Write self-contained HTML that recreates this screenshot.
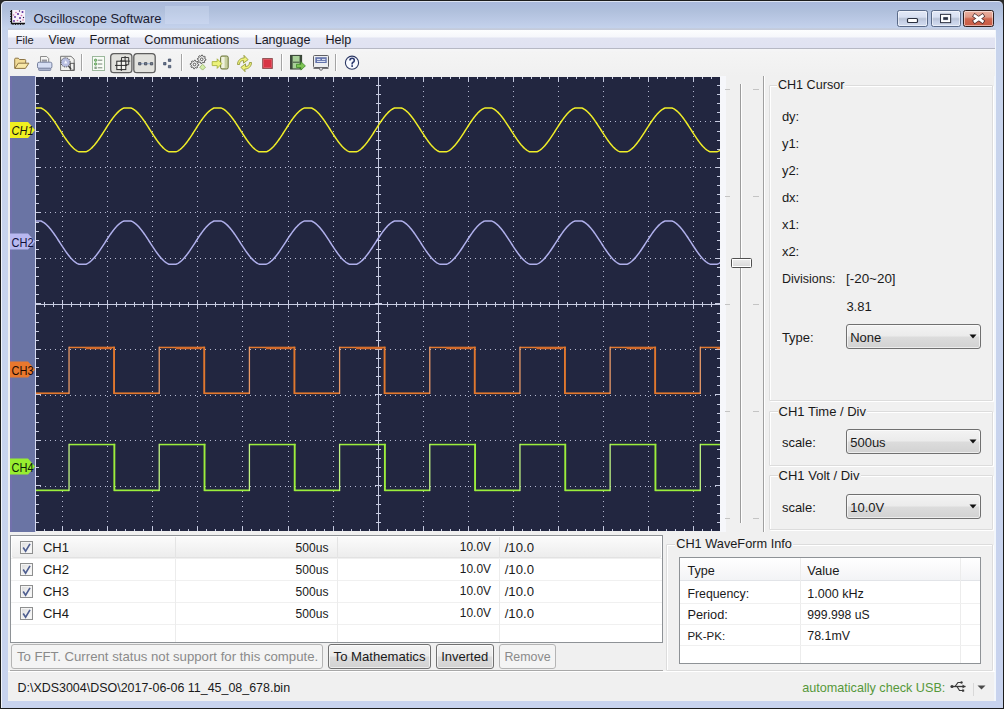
<!DOCTYPE html><html><head><meta charset="utf-8"><style>*{box-sizing:border-box}
html,body{margin:0;padding:0;width:1004px;height:709px;overflow:hidden;background:#2a2a2a;font-family:"Liberation Sans",sans-serif;color:#1a1a1a}
.ab{position:absolute}
.t{position:absolute;white-space:nowrap;line-height:1}
.cb{position:absolute;border:1px solid #707070;border-radius:3px;background:linear-gradient(#f3f3f3 0%,#ebebeb 48%,#dcdcdc 52%,#d2d2d2 100%);box-shadow:inset 0 0 0 1px rgba(255,255,255,.6)}
.dis{position:absolute;border:1px solid #b4b4b4;border-radius:3px;background:#f4f4f4}
.gb{position:absolute;border:1px solid #dcdcdc;border-radius:1px;box-shadow:inset 1px 1px 0 #fff,1px 1px 0 #fff}
</style></head><body><div class="ab" style="left:0;top:0;width:1004px;height:709px;border:1px solid #1c1c1c;border-radius:6px 6px 0 0;background:linear-gradient(#a9b8dc 0px,#b0c0dc 10px,#bccae6 20px,#c4d2ec 27px,#c8d4ec 40px,#c8d3ee 709px)"></div><div class="ab" style="left:1px;top:1px;width:1002px;height:707px;border-top:1px solid rgba(255,255,255,.6);border-left:1px solid rgba(255,255,255,.75);border-radius:5px 5px 0 0"></div><div class="ab" style="left:165px;top:6px;width:44px;height:18px;background:rgba(222,232,252,.3)"></div><svg class="ab" style="left:9px;top:9px" width="18" height="17"><rect x="3" y="1" width="13" height="13" fill="#f8f2fa"/><path d="M2.5 1v13.5H16" stroke="#141414" stroke-width="1.3" fill="none"/><path d="M1 2.5h1.5M1 5h1.5M1 7.5h1.5M1 10h1.5M1 12.5h1.5M4 14.5v1.5M6.5 14.5v1.5M9 14.5v1.5M11.5 14.5v1.5M14 14.5v1.5" stroke="#141414" stroke-width="0.9"/><g fill="#5a2a9a"><circle cx="13.5" cy="3" r="1"/><circle cx="9" cy="5" r="1"/><circle cx="6" cy="8" r="0.9"/><circle cx="11" cy="9" r="1"/><circle cx="5" cy="12" r="0.9"/></g><g fill="#d070a8"><circle cx="7" cy="3.5" r="0.8"/><circle cx="4.5" cy="6" r="0.8"/><circle cx="12.5" cy="6.5" r="0.8"/><circle cx="8.5" cy="11.5" r="0.8"/><circle cx="14" cy="11" r="0.8"/></g><g fill="#2a2050"><circle cx="10.5" cy="2" r="0.7"/><circle cx="14.5" cy="8.5" r="0.7"/><circle cx="11.5" cy="12.5" r="0.7"/></g></svg><div class="t" style="left:33.5px;top:12.65px;font-size:12.94px;color:#1b1b30;">Oscilloscope Software</div><div class="ab" style="left:897px;top:10px;width:30.5px;height:17px;border:1px solid #5a6a88;border-radius:2.5px;background:linear-gradient(#e2e8f6 0%,#d8e0f2 40%,#b8c2d6 52%,#c6d0e6 70%,#d4ddf0 100%);box-shadow:inset 0 0 0 1px rgba(255,255,255,.5)"></div><div class="ab" style="left:930.5px;top:10px;width:30px;height:17px;border:1px solid #5a6a88;border-radius:2.5px;background:linear-gradient(#e2e8f6 0%,#d8e0f2 40%,#b8c2d6 52%,#c6d0e6 70%,#d4ddf0 100%);box-shadow:inset 0 0 0 1px rgba(255,255,255,.5)"></div><div class="ab" style="left:963px;top:10px;width:30.5px;height:17px;border:1px solid #2e1e1e;border-radius:2.5px;background:linear-gradient(#eab0a0 0%,#e09a88 40%,#d06850 52%,#c85a44 100%);box-shadow:inset 0 0 0 1px rgba(255,255,255,.5)"></div><svg class="ab" style="left:895px;top:6px" width="100" height="24"><rect x="12.5" y="12.5" width="10" height="4" rx="1" fill="#fff" stroke="#2a3040" stroke-width="1.2"/><rect x="45.6" y="8.4" width="10" height="8.2" fill="none" stroke="#2a3040" stroke-width="1.1"/><rect x="47" y="9.8" width="7.2" height="5.4" fill="none" stroke="#fff" stroke-width="1.8"/><rect x="48.3" y="11.2" width="4.6" height="2.6" fill="#2a3040"/><path d="M80 10L87.3 15.2M87.3 10L80 15.2" stroke="#4a2a2a" stroke-width="4.2" stroke-linecap="square"/><path d="M80 10L87.3 15.2M87.3 10L80 15.2" stroke="#fff" stroke-width="2.8" stroke-linecap="square"/></svg><div class="ab" style="left:8px;top:30px;width:987px;height:671px;background:#f0f0f0"></div><div class="ab" style="left:994px;top:30px;width:2px;height:671px;background:#f2f6fb"></div><div class="ab" style="left:8px;top:28px;width:987px;height:2px;background:linear-gradient(#c2cde2,#c6cad8)"></div><div class="ab" style="left:8px;top:30px;width:987px;height:19px;background:linear-gradient(#fdfeff 0px,#f6f7fb 7px,#e2e4f2 8px,#e0e2f2 18px);border-bottom:1px solid #b6b8c4"></div><div class="t" style="left:15.8px;top:35.10px;font-size:11.11px;color:#1a1a24;">File</div><div class="t" style="left:48.4px;top:34.06px;font-size:12.33px;color:#1a1a24;">View</div><div class="t" style="left:89.6px;top:33.86px;font-size:12.57px;color:#1a1a24;">Format</div><div class="t" style="left:144.3px;top:33.70px;font-size:12.76px;color:#1a1a24;">Communications</div><div class="t" style="left:254.7px;top:33.90px;font-size:12.52px;color:#1a1a24;">Language</div><div class="t" style="left:325.4px;top:33.84px;font-size:12.59px;color:#1a1a24;">Help</div><div class="ab" style="left:8px;top:49px;width:987px;height:27px;background:linear-gradient(#f6f6f8 0px,#f4f4f4 3px,#f0f0f0 27px)"></div><svg class="ab" style="left:0;top:49px" width="380" height="27"><path d="M14.7 19.4V10.2q0-1 1-1h2.6l1.2 1.3h5.3q.9 0 .9.9v2.8" fill="#f2dc98" stroke="#8c7444" stroke-width="1"/><path d="M14.9 19.4l3.4-5.2h10.6l-3.5 5.2z" fill="#f8e8a8" stroke="#8c7444" stroke-width="1" stroke-linejoin="round"/><path d="M40.5 13V7.5h6.2l2 2V13" fill="#f6f6f4" stroke="#808080" stroke-width="0.9"/><path d="M41.8 11.2h5.2M41.8 13h5.2" stroke="#5a5a6a" stroke-width="0.9"/><rect x="37.5" y="13.2" width="14.4" height="6.2" rx="1.6" fill="#d6def4" stroke="#76809e" stroke-width="1"/><rect x="38.6" y="19.2" width="12.2" height="2.3" rx="0.8" fill="#aab2cc" stroke="#76809e" stroke-width="0.8"/><path d="M60.6 21.5V7.3h10.4l3.2 3v11.2z" fill="#f2f2f0" stroke="#767676" stroke-width="1"/><circle cx="65.6" cy="13.4" r="4.6" fill="#b8bee0" stroke="#3a3a3a" stroke-width="1" stroke-dasharray="1 .9"/><path d="M64 14.5l1.7-3.2 1.7 3.2z" fill="#f4f6ff"/><rect x="70.3" y="14.3" width="3.8" height="6.8" fill="none" stroke="#505050" stroke-width="0.9"/><path d="M68.5 17l2.5 3" stroke="#404040" stroke-width="1.4"/><rect x="81" y="5" width="1" height="17" fill="#a4a4a4"/><rect x="82" y="5" width="1" height="17" fill="#fff"/><rect x="92.5" y="7.5" width="12" height="14" fill="#f8fcf6" stroke="#9cb89c" stroke-width="1"/><circle cx="95.6" cy="11.2" r="1.2" fill="#9ad08a" stroke="#4a8a4a" stroke-width="0.7"/><circle cx="95.6" cy="15" r="1.2" fill="#9ad08a" stroke="#4a8a4a" stroke-width="0.7"/><rect x="94.4" y="17.6" width="2.4" height="2.4" fill="#8aa08a"/><path d="M97.8 11.2h4.5M97.8 15h4.5M97.8 18.8h4.5" stroke="#6a7a6a" stroke-width="0.9"/><rect x="110.7" y="4.6" width="21.2" height="19" rx="3.2" fill="#e0e0dc" stroke="#5e5e5e" stroke-width="1.3"/><path d="M121.5 8.5h7.2v7.2h-7.2zM125.1 7v10.5M120 12.1h10.2" fill="none" stroke="#3a3a3a" stroke-width="1"/><rect x="116.8" y="12.2" width="9" height="8.4" fill="#f4f4f0" stroke="#2a2a2a" stroke-width="1"/><path d="M121.3 10.8v11.2M115 16.4h12.2" stroke="#2a2a2a" stroke-width="1"/><rect x="133.8" y="4.6" width="21.4" height="19" rx="3.2" fill="#e2e2de" stroke="#5e5e5e" stroke-width="1.3"/><path d="M141 14.7h3M147 14.7h3" stroke="#9ab0d0" stroke-width="1"/><path d="M138.6 13.6h2.3v2.3h-2.3zM144.5 13.6h2.3v2.3h-2.3zM150.4 13.6h2.3v2.3h-2.3z" fill="#7a8494" stroke="#404858" stroke-width="0.8"/><path d="M163.6 13.5h2.4v2.4h-2.4zM168.4 10h2.4v2.4h-2.4zM168.4 16.4h2.4v2.4h-2.4z" fill="#6a7890" stroke="#3a4660" stroke-width="0.7"/><rect x="181" y="5" width="1" height="17" fill="#a4a4a4"/><rect x="182" y="5" width="1" height="17" fill="#fff"/><path d="M198.80,15.50 L198.72,16.34 L197.46,16.72 L197.16,17.28 L197.54,18.54 L196.89,19.08 L195.72,18.46 L195.12,18.64 L194.50,19.80 L193.66,19.72 L193.28,18.46 L192.72,18.16 L191.46,18.54 L190.92,17.89 L191.54,16.72 L191.36,16.12 L190.20,15.50 L190.28,14.66 L191.54,14.28 L191.84,13.72 L191.46,12.46 L192.11,11.92 L193.28,12.54 L193.88,12.36 L194.50,11.20 L195.34,11.28 L195.72,12.54 L196.28,12.84 L197.54,12.46 L198.08,13.11 L197.46,14.28 L197.64,14.88Z" fill="#f0f0f0" stroke="#4a4a4a" stroke-width="0.9" stroke-linejoin="round"/><circle cx="194.5" cy="15.5" r="1.3" fill="#fff" stroke="#4a4a4a" stroke-width="0.9"/><path d="M206.00,10.30 L205.92,11.14 L204.66,11.52 L204.36,12.08 L204.74,13.34 L204.09,13.88 L202.92,13.26 L202.32,13.44 L201.70,14.60 L200.86,14.52 L200.48,13.26 L199.92,12.96 L198.66,13.34 L198.12,12.69 L198.74,11.52 L198.56,10.92 L197.40,10.30 L197.48,9.46 L198.74,9.08 L199.04,8.52 L198.66,7.26 L199.31,6.72 L200.48,7.34 L201.08,7.16 L201.70,6.00 L202.54,6.08 L202.92,7.34 L203.48,7.64 L204.74,7.26 L205.28,7.91 L204.66,9.08 L204.84,9.68Z" fill="#f0f0f0" stroke="#4a4a4a" stroke-width="0.9" stroke-linejoin="round"/><circle cx="201.7" cy="10.3" r="1.3" fill="#fff" stroke="#4a4a4a" stroke-width="0.9"/><path d="M202.6 15.3l2.9 2.9-2.9 2.9-2.9-2.9z" fill="#d4ecaa" stroke="#90b060" stroke-width="0.8"/><rect x="220.6" y="7" width="7.6" height="13" rx="1.5" fill="#c8d0a0" stroke="#6a7438" stroke-width="1"/><rect x="221.4" y="8" width="3.2" height="11" fill="#f0f2e0"/><path d="M212.2 12.6h5v-2.8l4.6 4.8-4.6 4.8v-2.8h-5z" fill="#ecf27a" stroke="#a0aa30" stroke-width="0.8"/><path d="M237.5 15.5c0-4 3-6.6 6.8-6.6l-.4-2.6 4.2 4.4-4.6 3.4v-2.6c-2.4 0-4 1.5-4 4z" fill="#eef07a" stroke="#8a9030" stroke-width="0.8"/><path d="M251.5 13.5c0 4-3 6.6-6.8 6.6l.4 2.6-4.2-4.4 4.6-3.4v2.6c2.4 0 4-1.5 4-4z" fill="#eef07a" stroke="#8a9030" stroke-width="0.8"/><rect x="262.7" y="9.6" width="9.6" height="9.8" fill="#d83444" stroke="#8a5050" stroke-width="1"/><rect x="263.7" y="10.6" width="7.6" height="7.8" fill="none" stroke="#e86a78" stroke-width="0.6"/><rect x="281" y="5" width="1" height="17" fill="#a4a4a4"/><rect x="282" y="5" width="1" height="17" fill="#fff"/><rect x="290.6" y="6.4" width="11" height="13.6" fill="#a8d098" stroke="#2e3a2e" stroke-width="1"/><rect x="290.6" y="6.4" width="2" height="13.6" fill="#3a4a3a"/><rect x="299.6" y="6.4" width="2" height="13.6" fill="#3a4a3a"/><path d="M293 13.2h6.5" stroke="#3a4a3a" stroke-width="1"/><path d="M296.5 15.3h4.4v-2.6l4.5 4.2-4.5 4.2v-2.6h-4.4z" fill="#7ec454" stroke="#3e8a2a" stroke-width="0.8"/><rect x="313.5" y="6.5" width="15" height="12" rx="1" fill="#eceef0" stroke="#606064" stroke-width="1"/><rect x="315.3" y="8.2" width="11.4" height="5.8" fill="#6474ac"/><path d="M317 10.4h3.4M322 10.4h3.4M317 12.4h8.4" stroke="#e8eefa" stroke-width="1"/><path d="M313.5 19.3h15" stroke="#606064" stroke-width="1.1"/><circle cx="321" cy="19.8" r="1.5" fill="#e0e0e0" stroke="#606064" stroke-width="0.8"/><rect x="335" y="5" width="1" height="17" fill="#a4a4a4"/><rect x="336" y="5" width="1" height="17" fill="#fff"/><circle cx="352" cy="13.7" r="6.6" fill="#f8faff" stroke="#2c3864" stroke-width="1.1"/><path d="M349.9 11.6q0-2.3 2.2-2.3 2.2 0 2.2 2.1 0 1.2-1.2 1.9-1 .6-1 1.6v.5" fill="none" stroke="#2c3a70" stroke-width="1.6"/><rect x="351.3" y="16.2" width="1.7" height="1.7" fill="#2c3a70"/></svg><svg width="1004" height="709" style="position:absolute;left:0;top:0" shape-rendering="crispEdges"><rect x="10" y="76" width="25" height="456" fill="#6a74a4"/><rect x="10" y="76" width="2" height="456" fill="#7270ac"/><rect x="35" y="76" width="1" height="456" fill="#d4d8f0"/><rect x="36" y="77" width="684" height="454" fill="#222640"/><path d="M62 81h1v1h-1zM62 86h1v1h-1zM62 91h1v1h-1zM62 96h1v1h-1zM62 101h1v1h-1zM62 106h1v1h-1zM62 111h1v1h-1zM62 116h1v1h-1zM62 121h1v1h-1zM62 126h1v1h-1zM62 131h1v1h-1zM62 136h1v1h-1zM62 141h1v1h-1zM62 146h1v1h-1zM62 151h1v1h-1zM62 156h1v1h-1zM62 161h1v1h-1zM62 166h1v1h-1zM62 171h1v1h-1zM62 176h1v1h-1zM62 181h1v1h-1zM62 186h1v1h-1zM62 191h1v1h-1zM62 196h1v1h-1zM62 201h1v1h-1zM62 206h1v1h-1zM62 211h1v1h-1zM62 216h1v1h-1zM62 221h1v1h-1zM62 226h1v1h-1zM62 231h1v1h-1zM62 236h1v1h-1zM62 241h1v1h-1zM62 246h1v1h-1zM62 251h1v1h-1zM62 256h1v1h-1zM62 261h1v1h-1zM62 266h1v1h-1zM62 271h1v1h-1zM62 276h1v1h-1zM62 281h1v1h-1zM62 286h1v1h-1zM62 291h1v1h-1zM62 296h1v1h-1zM62 301h1v1h-1zM62 306h1v1h-1zM62 311h1v1h-1zM62 316h1v1h-1zM62 321h1v1h-1zM62 326h1v1h-1zM62 331h1v1h-1zM62 336h1v1h-1zM62 341h1v1h-1zM62 346h1v1h-1zM62 351h1v1h-1zM62 356h1v1h-1zM62 361h1v1h-1zM62 366h1v1h-1zM62 371h1v1h-1zM62 376h1v1h-1zM62 381h1v1h-1zM62 386h1v1h-1zM62 391h1v1h-1zM62 396h1v1h-1zM62 401h1v1h-1zM62 406h1v1h-1zM62 411h1v1h-1zM62 416h1v1h-1zM62 421h1v1h-1zM62 426h1v1h-1zM62 431h1v1h-1zM62 436h1v1h-1zM62 441h1v1h-1zM62 446h1v1h-1zM62 451h1v1h-1zM62 456h1v1h-1zM62 461h1v1h-1zM62 466h1v1h-1zM62 471h1v1h-1zM62 476h1v1h-1zM62 481h1v1h-1zM62 486h1v1h-1zM62 491h1v1h-1zM62 496h1v1h-1zM62 501h1v1h-1zM62 506h1v1h-1zM62 511h1v1h-1zM62 516h1v1h-1zM62 521h1v1h-1zM62 526h1v1h-1zM107 81h1v1h-1zM107 86h1v1h-1zM107 91h1v1h-1zM107 96h1v1h-1zM107 101h1v1h-1zM107 106h1v1h-1zM107 111h1v1h-1zM107 116h1v1h-1zM107 121h1v1h-1zM107 126h1v1h-1zM107 131h1v1h-1zM107 136h1v1h-1zM107 141h1v1h-1zM107 146h1v1h-1zM107 151h1v1h-1zM107 156h1v1h-1zM107 161h1v1h-1zM107 166h1v1h-1zM107 171h1v1h-1zM107 176h1v1h-1zM107 181h1v1h-1zM107 186h1v1h-1zM107 191h1v1h-1zM107 196h1v1h-1zM107 201h1v1h-1zM107 206h1v1h-1zM107 211h1v1h-1zM107 216h1v1h-1zM107 221h1v1h-1zM107 226h1v1h-1zM107 231h1v1h-1zM107 236h1v1h-1zM107 241h1v1h-1zM107 246h1v1h-1zM107 251h1v1h-1zM107 256h1v1h-1zM107 261h1v1h-1zM107 266h1v1h-1zM107 271h1v1h-1zM107 276h1v1h-1zM107 281h1v1h-1zM107 286h1v1h-1zM107 291h1v1h-1zM107 296h1v1h-1zM107 301h1v1h-1zM107 306h1v1h-1zM107 311h1v1h-1zM107 316h1v1h-1zM107 321h1v1h-1zM107 326h1v1h-1zM107 331h1v1h-1zM107 336h1v1h-1zM107 341h1v1h-1zM107 346h1v1h-1zM107 351h1v1h-1zM107 356h1v1h-1zM107 361h1v1h-1zM107 366h1v1h-1zM107 371h1v1h-1zM107 376h1v1h-1zM107 381h1v1h-1zM107 386h1v1h-1zM107 391h1v1h-1zM107 396h1v1h-1zM107 401h1v1h-1zM107 406h1v1h-1zM107 411h1v1h-1zM107 416h1v1h-1zM107 421h1v1h-1zM107 426h1v1h-1zM107 431h1v1h-1zM107 436h1v1h-1zM107 441h1v1h-1zM107 446h1v1h-1zM107 451h1v1h-1zM107 456h1v1h-1zM107 461h1v1h-1zM107 466h1v1h-1zM107 471h1v1h-1zM107 476h1v1h-1zM107 481h1v1h-1zM107 486h1v1h-1zM107 491h1v1h-1zM107 496h1v1h-1zM107 501h1v1h-1zM107 506h1v1h-1zM107 511h1v1h-1zM107 516h1v1h-1zM107 521h1v1h-1zM107 526h1v1h-1zM152 81h1v1h-1zM152 86h1v1h-1zM152 91h1v1h-1zM152 96h1v1h-1zM152 101h1v1h-1zM152 106h1v1h-1zM152 111h1v1h-1zM152 116h1v1h-1zM152 121h1v1h-1zM152 126h1v1h-1zM152 131h1v1h-1zM152 136h1v1h-1zM152 141h1v1h-1zM152 146h1v1h-1zM152 151h1v1h-1zM152 156h1v1h-1zM152 161h1v1h-1zM152 166h1v1h-1zM152 171h1v1h-1zM152 176h1v1h-1zM152 181h1v1h-1zM152 186h1v1h-1zM152 191h1v1h-1zM152 196h1v1h-1zM152 201h1v1h-1zM152 206h1v1h-1zM152 211h1v1h-1zM152 216h1v1h-1zM152 221h1v1h-1zM152 226h1v1h-1zM152 231h1v1h-1zM152 236h1v1h-1zM152 241h1v1h-1zM152 246h1v1h-1zM152 251h1v1h-1zM152 256h1v1h-1zM152 261h1v1h-1zM152 266h1v1h-1zM152 271h1v1h-1zM152 276h1v1h-1zM152 281h1v1h-1zM152 286h1v1h-1zM152 291h1v1h-1zM152 296h1v1h-1zM152 301h1v1h-1zM152 306h1v1h-1zM152 311h1v1h-1zM152 316h1v1h-1zM152 321h1v1h-1zM152 326h1v1h-1zM152 331h1v1h-1zM152 336h1v1h-1zM152 341h1v1h-1zM152 346h1v1h-1zM152 351h1v1h-1zM152 356h1v1h-1zM152 361h1v1h-1zM152 366h1v1h-1zM152 371h1v1h-1zM152 376h1v1h-1zM152 381h1v1h-1zM152 386h1v1h-1zM152 391h1v1h-1zM152 396h1v1h-1zM152 401h1v1h-1zM152 406h1v1h-1zM152 411h1v1h-1zM152 416h1v1h-1zM152 421h1v1h-1zM152 426h1v1h-1zM152 431h1v1h-1zM152 436h1v1h-1zM152 441h1v1h-1zM152 446h1v1h-1zM152 451h1v1h-1zM152 456h1v1h-1zM152 461h1v1h-1zM152 466h1v1h-1zM152 471h1v1h-1zM152 476h1v1h-1zM152 481h1v1h-1zM152 486h1v1h-1zM152 491h1v1h-1zM152 496h1v1h-1zM152 501h1v1h-1zM152 506h1v1h-1zM152 511h1v1h-1zM152 516h1v1h-1zM152 521h1v1h-1zM152 526h1v1h-1zM197 81h1v1h-1zM197 86h1v1h-1zM197 91h1v1h-1zM197 96h1v1h-1zM197 101h1v1h-1zM197 106h1v1h-1zM197 111h1v1h-1zM197 116h1v1h-1zM197 121h1v1h-1zM197 126h1v1h-1zM197 131h1v1h-1zM197 136h1v1h-1zM197 141h1v1h-1zM197 146h1v1h-1zM197 151h1v1h-1zM197 156h1v1h-1zM197 161h1v1h-1zM197 166h1v1h-1zM197 171h1v1h-1zM197 176h1v1h-1zM197 181h1v1h-1zM197 186h1v1h-1zM197 191h1v1h-1zM197 196h1v1h-1zM197 201h1v1h-1zM197 206h1v1h-1zM197 211h1v1h-1zM197 216h1v1h-1zM197 221h1v1h-1zM197 226h1v1h-1zM197 231h1v1h-1zM197 236h1v1h-1zM197 241h1v1h-1zM197 246h1v1h-1zM197 251h1v1h-1zM197 256h1v1h-1zM197 261h1v1h-1zM197 266h1v1h-1zM197 271h1v1h-1zM197 276h1v1h-1zM197 281h1v1h-1zM197 286h1v1h-1zM197 291h1v1h-1zM197 296h1v1h-1zM197 301h1v1h-1zM197 306h1v1h-1zM197 311h1v1h-1zM197 316h1v1h-1zM197 321h1v1h-1zM197 326h1v1h-1zM197 331h1v1h-1zM197 336h1v1h-1zM197 341h1v1h-1zM197 346h1v1h-1zM197 351h1v1h-1zM197 356h1v1h-1zM197 361h1v1h-1zM197 366h1v1h-1zM197 371h1v1h-1zM197 376h1v1h-1zM197 381h1v1h-1zM197 386h1v1h-1zM197 391h1v1h-1zM197 396h1v1h-1zM197 401h1v1h-1zM197 406h1v1h-1zM197 411h1v1h-1zM197 416h1v1h-1zM197 421h1v1h-1zM197 426h1v1h-1zM197 431h1v1h-1zM197 436h1v1h-1zM197 441h1v1h-1zM197 446h1v1h-1zM197 451h1v1h-1zM197 456h1v1h-1zM197 461h1v1h-1zM197 466h1v1h-1zM197 471h1v1h-1zM197 476h1v1h-1zM197 481h1v1h-1zM197 486h1v1h-1zM197 491h1v1h-1zM197 496h1v1h-1zM197 501h1v1h-1zM197 506h1v1h-1zM197 511h1v1h-1zM197 516h1v1h-1zM197 521h1v1h-1zM197 526h1v1h-1zM242 81h1v1h-1zM242 86h1v1h-1zM242 91h1v1h-1zM242 96h1v1h-1zM242 101h1v1h-1zM242 106h1v1h-1zM242 111h1v1h-1zM242 116h1v1h-1zM242 121h1v1h-1zM242 126h1v1h-1zM242 131h1v1h-1zM242 136h1v1h-1zM242 141h1v1h-1zM242 146h1v1h-1zM242 151h1v1h-1zM242 156h1v1h-1zM242 161h1v1h-1zM242 166h1v1h-1zM242 171h1v1h-1zM242 176h1v1h-1zM242 181h1v1h-1zM242 186h1v1h-1zM242 191h1v1h-1zM242 196h1v1h-1zM242 201h1v1h-1zM242 206h1v1h-1zM242 211h1v1h-1zM242 216h1v1h-1zM242 221h1v1h-1zM242 226h1v1h-1zM242 231h1v1h-1zM242 236h1v1h-1zM242 241h1v1h-1zM242 246h1v1h-1zM242 251h1v1h-1zM242 256h1v1h-1zM242 261h1v1h-1zM242 266h1v1h-1zM242 271h1v1h-1zM242 276h1v1h-1zM242 281h1v1h-1zM242 286h1v1h-1zM242 291h1v1h-1zM242 296h1v1h-1zM242 301h1v1h-1zM242 306h1v1h-1zM242 311h1v1h-1zM242 316h1v1h-1zM242 321h1v1h-1zM242 326h1v1h-1zM242 331h1v1h-1zM242 336h1v1h-1zM242 341h1v1h-1zM242 346h1v1h-1zM242 351h1v1h-1zM242 356h1v1h-1zM242 361h1v1h-1zM242 366h1v1h-1zM242 371h1v1h-1zM242 376h1v1h-1zM242 381h1v1h-1zM242 386h1v1h-1zM242 391h1v1h-1zM242 396h1v1h-1zM242 401h1v1h-1zM242 406h1v1h-1zM242 411h1v1h-1zM242 416h1v1h-1zM242 421h1v1h-1zM242 426h1v1h-1zM242 431h1v1h-1zM242 436h1v1h-1zM242 441h1v1h-1zM242 446h1v1h-1zM242 451h1v1h-1zM242 456h1v1h-1zM242 461h1v1h-1zM242 466h1v1h-1zM242 471h1v1h-1zM242 476h1v1h-1zM242 481h1v1h-1zM242 486h1v1h-1zM242 491h1v1h-1zM242 496h1v1h-1zM242 501h1v1h-1zM242 506h1v1h-1zM242 511h1v1h-1zM242 516h1v1h-1zM242 521h1v1h-1zM242 526h1v1h-1zM288 81h1v1h-1zM288 86h1v1h-1zM288 91h1v1h-1zM288 96h1v1h-1zM288 101h1v1h-1zM288 106h1v1h-1zM288 111h1v1h-1zM288 116h1v1h-1zM288 121h1v1h-1zM288 126h1v1h-1zM288 131h1v1h-1zM288 136h1v1h-1zM288 141h1v1h-1zM288 146h1v1h-1zM288 151h1v1h-1zM288 156h1v1h-1zM288 161h1v1h-1zM288 166h1v1h-1zM288 171h1v1h-1zM288 176h1v1h-1zM288 181h1v1h-1zM288 186h1v1h-1zM288 191h1v1h-1zM288 196h1v1h-1zM288 201h1v1h-1zM288 206h1v1h-1zM288 211h1v1h-1zM288 216h1v1h-1zM288 221h1v1h-1zM288 226h1v1h-1zM288 231h1v1h-1zM288 236h1v1h-1zM288 241h1v1h-1zM288 246h1v1h-1zM288 251h1v1h-1zM288 256h1v1h-1zM288 261h1v1h-1zM288 266h1v1h-1zM288 271h1v1h-1zM288 276h1v1h-1zM288 281h1v1h-1zM288 286h1v1h-1zM288 291h1v1h-1zM288 296h1v1h-1zM288 301h1v1h-1zM288 306h1v1h-1zM288 311h1v1h-1zM288 316h1v1h-1zM288 321h1v1h-1zM288 326h1v1h-1zM288 331h1v1h-1zM288 336h1v1h-1zM288 341h1v1h-1zM288 346h1v1h-1zM288 351h1v1h-1zM288 356h1v1h-1zM288 361h1v1h-1zM288 366h1v1h-1zM288 371h1v1h-1zM288 376h1v1h-1zM288 381h1v1h-1zM288 386h1v1h-1zM288 391h1v1h-1zM288 396h1v1h-1zM288 401h1v1h-1zM288 406h1v1h-1zM288 411h1v1h-1zM288 416h1v1h-1zM288 421h1v1h-1zM288 426h1v1h-1zM288 431h1v1h-1zM288 436h1v1h-1zM288 441h1v1h-1zM288 446h1v1h-1zM288 451h1v1h-1zM288 456h1v1h-1zM288 461h1v1h-1zM288 466h1v1h-1zM288 471h1v1h-1zM288 476h1v1h-1zM288 481h1v1h-1zM288 486h1v1h-1zM288 491h1v1h-1zM288 496h1v1h-1zM288 501h1v1h-1zM288 506h1v1h-1zM288 511h1v1h-1zM288 516h1v1h-1zM288 521h1v1h-1zM288 526h1v1h-1zM333 81h1v1h-1zM333 86h1v1h-1zM333 91h1v1h-1zM333 96h1v1h-1zM333 101h1v1h-1zM333 106h1v1h-1zM333 111h1v1h-1zM333 116h1v1h-1zM333 121h1v1h-1zM333 126h1v1h-1zM333 131h1v1h-1zM333 136h1v1h-1zM333 141h1v1h-1zM333 146h1v1h-1zM333 151h1v1h-1zM333 156h1v1h-1zM333 161h1v1h-1zM333 166h1v1h-1zM333 171h1v1h-1zM333 176h1v1h-1zM333 181h1v1h-1zM333 186h1v1h-1zM333 191h1v1h-1zM333 196h1v1h-1zM333 201h1v1h-1zM333 206h1v1h-1zM333 211h1v1h-1zM333 216h1v1h-1zM333 221h1v1h-1zM333 226h1v1h-1zM333 231h1v1h-1zM333 236h1v1h-1zM333 241h1v1h-1zM333 246h1v1h-1zM333 251h1v1h-1zM333 256h1v1h-1zM333 261h1v1h-1zM333 266h1v1h-1zM333 271h1v1h-1zM333 276h1v1h-1zM333 281h1v1h-1zM333 286h1v1h-1zM333 291h1v1h-1zM333 296h1v1h-1zM333 301h1v1h-1zM333 306h1v1h-1zM333 311h1v1h-1zM333 316h1v1h-1zM333 321h1v1h-1zM333 326h1v1h-1zM333 331h1v1h-1zM333 336h1v1h-1zM333 341h1v1h-1zM333 346h1v1h-1zM333 351h1v1h-1zM333 356h1v1h-1zM333 361h1v1h-1zM333 366h1v1h-1zM333 371h1v1h-1zM333 376h1v1h-1zM333 381h1v1h-1zM333 386h1v1h-1zM333 391h1v1h-1zM333 396h1v1h-1zM333 401h1v1h-1zM333 406h1v1h-1zM333 411h1v1h-1zM333 416h1v1h-1zM333 421h1v1h-1zM333 426h1v1h-1zM333 431h1v1h-1zM333 436h1v1h-1zM333 441h1v1h-1zM333 446h1v1h-1zM333 451h1v1h-1zM333 456h1v1h-1zM333 461h1v1h-1zM333 466h1v1h-1zM333 471h1v1h-1zM333 476h1v1h-1zM333 481h1v1h-1zM333 486h1v1h-1zM333 491h1v1h-1zM333 496h1v1h-1zM333 501h1v1h-1zM333 506h1v1h-1zM333 511h1v1h-1zM333 516h1v1h-1zM333 521h1v1h-1zM333 526h1v1h-1zM423 81h1v1h-1zM423 86h1v1h-1zM423 91h1v1h-1zM423 96h1v1h-1zM423 101h1v1h-1zM423 106h1v1h-1zM423 111h1v1h-1zM423 116h1v1h-1zM423 121h1v1h-1zM423 126h1v1h-1zM423 131h1v1h-1zM423 136h1v1h-1zM423 141h1v1h-1zM423 146h1v1h-1zM423 151h1v1h-1zM423 156h1v1h-1zM423 161h1v1h-1zM423 166h1v1h-1zM423 171h1v1h-1zM423 176h1v1h-1zM423 181h1v1h-1zM423 186h1v1h-1zM423 191h1v1h-1zM423 196h1v1h-1zM423 201h1v1h-1zM423 206h1v1h-1zM423 211h1v1h-1zM423 216h1v1h-1zM423 221h1v1h-1zM423 226h1v1h-1zM423 231h1v1h-1zM423 236h1v1h-1zM423 241h1v1h-1zM423 246h1v1h-1zM423 251h1v1h-1zM423 256h1v1h-1zM423 261h1v1h-1zM423 266h1v1h-1zM423 271h1v1h-1zM423 276h1v1h-1zM423 281h1v1h-1zM423 286h1v1h-1zM423 291h1v1h-1zM423 296h1v1h-1zM423 301h1v1h-1zM423 306h1v1h-1zM423 311h1v1h-1zM423 316h1v1h-1zM423 321h1v1h-1zM423 326h1v1h-1zM423 331h1v1h-1zM423 336h1v1h-1zM423 341h1v1h-1zM423 346h1v1h-1zM423 351h1v1h-1zM423 356h1v1h-1zM423 361h1v1h-1zM423 366h1v1h-1zM423 371h1v1h-1zM423 376h1v1h-1zM423 381h1v1h-1zM423 386h1v1h-1zM423 391h1v1h-1zM423 396h1v1h-1zM423 401h1v1h-1zM423 406h1v1h-1zM423 411h1v1h-1zM423 416h1v1h-1zM423 421h1v1h-1zM423 426h1v1h-1zM423 431h1v1h-1zM423 436h1v1h-1zM423 441h1v1h-1zM423 446h1v1h-1zM423 451h1v1h-1zM423 456h1v1h-1zM423 461h1v1h-1zM423 466h1v1h-1zM423 471h1v1h-1zM423 476h1v1h-1zM423 481h1v1h-1zM423 486h1v1h-1zM423 491h1v1h-1zM423 496h1v1h-1zM423 501h1v1h-1zM423 506h1v1h-1zM423 511h1v1h-1zM423 516h1v1h-1zM423 521h1v1h-1zM423 526h1v1h-1zM468 81h1v1h-1zM468 86h1v1h-1zM468 91h1v1h-1zM468 96h1v1h-1zM468 101h1v1h-1zM468 106h1v1h-1zM468 111h1v1h-1zM468 116h1v1h-1zM468 121h1v1h-1zM468 126h1v1h-1zM468 131h1v1h-1zM468 136h1v1h-1zM468 141h1v1h-1zM468 146h1v1h-1zM468 151h1v1h-1zM468 156h1v1h-1zM468 161h1v1h-1zM468 166h1v1h-1zM468 171h1v1h-1zM468 176h1v1h-1zM468 181h1v1h-1zM468 186h1v1h-1zM468 191h1v1h-1zM468 196h1v1h-1zM468 201h1v1h-1zM468 206h1v1h-1zM468 211h1v1h-1zM468 216h1v1h-1zM468 221h1v1h-1zM468 226h1v1h-1zM468 231h1v1h-1zM468 236h1v1h-1zM468 241h1v1h-1zM468 246h1v1h-1zM468 251h1v1h-1zM468 256h1v1h-1zM468 261h1v1h-1zM468 266h1v1h-1zM468 271h1v1h-1zM468 276h1v1h-1zM468 281h1v1h-1zM468 286h1v1h-1zM468 291h1v1h-1zM468 296h1v1h-1zM468 301h1v1h-1zM468 306h1v1h-1zM468 311h1v1h-1zM468 316h1v1h-1zM468 321h1v1h-1zM468 326h1v1h-1zM468 331h1v1h-1zM468 336h1v1h-1zM468 341h1v1h-1zM468 346h1v1h-1zM468 351h1v1h-1zM468 356h1v1h-1zM468 361h1v1h-1zM468 366h1v1h-1zM468 371h1v1h-1zM468 376h1v1h-1zM468 381h1v1h-1zM468 386h1v1h-1zM468 391h1v1h-1zM468 396h1v1h-1zM468 401h1v1h-1zM468 406h1v1h-1zM468 411h1v1h-1zM468 416h1v1h-1zM468 421h1v1h-1zM468 426h1v1h-1zM468 431h1v1h-1zM468 436h1v1h-1zM468 441h1v1h-1zM468 446h1v1h-1zM468 451h1v1h-1zM468 456h1v1h-1zM468 461h1v1h-1zM468 466h1v1h-1zM468 471h1v1h-1zM468 476h1v1h-1zM468 481h1v1h-1zM468 486h1v1h-1zM468 491h1v1h-1zM468 496h1v1h-1zM468 501h1v1h-1zM468 506h1v1h-1zM468 511h1v1h-1zM468 516h1v1h-1zM468 521h1v1h-1zM468 526h1v1h-1zM513 81h1v1h-1zM513 86h1v1h-1zM513 91h1v1h-1zM513 96h1v1h-1zM513 101h1v1h-1zM513 106h1v1h-1zM513 111h1v1h-1zM513 116h1v1h-1zM513 121h1v1h-1zM513 126h1v1h-1zM513 131h1v1h-1zM513 136h1v1h-1zM513 141h1v1h-1zM513 146h1v1h-1zM513 151h1v1h-1zM513 156h1v1h-1zM513 161h1v1h-1zM513 166h1v1h-1zM513 171h1v1h-1zM513 176h1v1h-1zM513 181h1v1h-1zM513 186h1v1h-1zM513 191h1v1h-1zM513 196h1v1h-1zM513 201h1v1h-1zM513 206h1v1h-1zM513 211h1v1h-1zM513 216h1v1h-1zM513 221h1v1h-1zM513 226h1v1h-1zM513 231h1v1h-1zM513 236h1v1h-1zM513 241h1v1h-1zM513 246h1v1h-1zM513 251h1v1h-1zM513 256h1v1h-1zM513 261h1v1h-1zM513 266h1v1h-1zM513 271h1v1h-1zM513 276h1v1h-1zM513 281h1v1h-1zM513 286h1v1h-1zM513 291h1v1h-1zM513 296h1v1h-1zM513 301h1v1h-1zM513 306h1v1h-1zM513 311h1v1h-1zM513 316h1v1h-1zM513 321h1v1h-1zM513 326h1v1h-1zM513 331h1v1h-1zM513 336h1v1h-1zM513 341h1v1h-1zM513 346h1v1h-1zM513 351h1v1h-1zM513 356h1v1h-1zM513 361h1v1h-1zM513 366h1v1h-1zM513 371h1v1h-1zM513 376h1v1h-1zM513 381h1v1h-1zM513 386h1v1h-1zM513 391h1v1h-1zM513 396h1v1h-1zM513 401h1v1h-1zM513 406h1v1h-1zM513 411h1v1h-1zM513 416h1v1h-1zM513 421h1v1h-1zM513 426h1v1h-1zM513 431h1v1h-1zM513 436h1v1h-1zM513 441h1v1h-1zM513 446h1v1h-1zM513 451h1v1h-1zM513 456h1v1h-1zM513 461h1v1h-1zM513 466h1v1h-1zM513 471h1v1h-1zM513 476h1v1h-1zM513 481h1v1h-1zM513 486h1v1h-1zM513 491h1v1h-1zM513 496h1v1h-1zM513 501h1v1h-1zM513 506h1v1h-1zM513 511h1v1h-1zM513 516h1v1h-1zM513 521h1v1h-1zM513 526h1v1h-1zM558 81h1v1h-1zM558 86h1v1h-1zM558 91h1v1h-1zM558 96h1v1h-1zM558 101h1v1h-1zM558 106h1v1h-1zM558 111h1v1h-1zM558 116h1v1h-1zM558 121h1v1h-1zM558 126h1v1h-1zM558 131h1v1h-1zM558 136h1v1h-1zM558 141h1v1h-1zM558 146h1v1h-1zM558 151h1v1h-1zM558 156h1v1h-1zM558 161h1v1h-1zM558 166h1v1h-1zM558 171h1v1h-1zM558 176h1v1h-1zM558 181h1v1h-1zM558 186h1v1h-1zM558 191h1v1h-1zM558 196h1v1h-1zM558 201h1v1h-1zM558 206h1v1h-1zM558 211h1v1h-1zM558 216h1v1h-1zM558 221h1v1h-1zM558 226h1v1h-1zM558 231h1v1h-1zM558 236h1v1h-1zM558 241h1v1h-1zM558 246h1v1h-1zM558 251h1v1h-1zM558 256h1v1h-1zM558 261h1v1h-1zM558 266h1v1h-1zM558 271h1v1h-1zM558 276h1v1h-1zM558 281h1v1h-1zM558 286h1v1h-1zM558 291h1v1h-1zM558 296h1v1h-1zM558 301h1v1h-1zM558 306h1v1h-1zM558 311h1v1h-1zM558 316h1v1h-1zM558 321h1v1h-1zM558 326h1v1h-1zM558 331h1v1h-1zM558 336h1v1h-1zM558 341h1v1h-1zM558 346h1v1h-1zM558 351h1v1h-1zM558 356h1v1h-1zM558 361h1v1h-1zM558 366h1v1h-1zM558 371h1v1h-1zM558 376h1v1h-1zM558 381h1v1h-1zM558 386h1v1h-1zM558 391h1v1h-1zM558 396h1v1h-1zM558 401h1v1h-1zM558 406h1v1h-1zM558 411h1v1h-1zM558 416h1v1h-1zM558 421h1v1h-1zM558 426h1v1h-1zM558 431h1v1h-1zM558 436h1v1h-1zM558 441h1v1h-1zM558 446h1v1h-1zM558 451h1v1h-1zM558 456h1v1h-1zM558 461h1v1h-1zM558 466h1v1h-1zM558 471h1v1h-1zM558 476h1v1h-1zM558 481h1v1h-1zM558 486h1v1h-1zM558 491h1v1h-1zM558 496h1v1h-1zM558 501h1v1h-1zM558 506h1v1h-1zM558 511h1v1h-1zM558 516h1v1h-1zM558 521h1v1h-1zM558 526h1v1h-1zM603 81h1v1h-1zM603 86h1v1h-1zM603 91h1v1h-1zM603 96h1v1h-1zM603 101h1v1h-1zM603 106h1v1h-1zM603 111h1v1h-1zM603 116h1v1h-1zM603 121h1v1h-1zM603 126h1v1h-1zM603 131h1v1h-1zM603 136h1v1h-1zM603 141h1v1h-1zM603 146h1v1h-1zM603 151h1v1h-1zM603 156h1v1h-1zM603 161h1v1h-1zM603 166h1v1h-1zM603 171h1v1h-1zM603 176h1v1h-1zM603 181h1v1h-1zM603 186h1v1h-1zM603 191h1v1h-1zM603 196h1v1h-1zM603 201h1v1h-1zM603 206h1v1h-1zM603 211h1v1h-1zM603 216h1v1h-1zM603 221h1v1h-1zM603 226h1v1h-1zM603 231h1v1h-1zM603 236h1v1h-1zM603 241h1v1h-1zM603 246h1v1h-1zM603 251h1v1h-1zM603 256h1v1h-1zM603 261h1v1h-1zM603 266h1v1h-1zM603 271h1v1h-1zM603 276h1v1h-1zM603 281h1v1h-1zM603 286h1v1h-1zM603 291h1v1h-1zM603 296h1v1h-1zM603 301h1v1h-1zM603 306h1v1h-1zM603 311h1v1h-1zM603 316h1v1h-1zM603 321h1v1h-1zM603 326h1v1h-1zM603 331h1v1h-1zM603 336h1v1h-1zM603 341h1v1h-1zM603 346h1v1h-1zM603 351h1v1h-1zM603 356h1v1h-1zM603 361h1v1h-1zM603 366h1v1h-1zM603 371h1v1h-1zM603 376h1v1h-1zM603 381h1v1h-1zM603 386h1v1h-1zM603 391h1v1h-1zM603 396h1v1h-1zM603 401h1v1h-1zM603 406h1v1h-1zM603 411h1v1h-1zM603 416h1v1h-1zM603 421h1v1h-1zM603 426h1v1h-1zM603 431h1v1h-1zM603 436h1v1h-1zM603 441h1v1h-1zM603 446h1v1h-1zM603 451h1v1h-1zM603 456h1v1h-1zM603 461h1v1h-1zM603 466h1v1h-1zM603 471h1v1h-1zM603 476h1v1h-1zM603 481h1v1h-1zM603 486h1v1h-1zM603 491h1v1h-1zM603 496h1v1h-1zM603 501h1v1h-1zM603 506h1v1h-1zM603 511h1v1h-1zM603 516h1v1h-1zM603 521h1v1h-1zM603 526h1v1h-1zM648 81h1v1h-1zM648 86h1v1h-1zM648 91h1v1h-1zM648 96h1v1h-1zM648 101h1v1h-1zM648 106h1v1h-1zM648 111h1v1h-1zM648 116h1v1h-1zM648 121h1v1h-1zM648 126h1v1h-1zM648 131h1v1h-1zM648 136h1v1h-1zM648 141h1v1h-1zM648 146h1v1h-1zM648 151h1v1h-1zM648 156h1v1h-1zM648 161h1v1h-1zM648 166h1v1h-1zM648 171h1v1h-1zM648 176h1v1h-1zM648 181h1v1h-1zM648 186h1v1h-1zM648 191h1v1h-1zM648 196h1v1h-1zM648 201h1v1h-1zM648 206h1v1h-1zM648 211h1v1h-1zM648 216h1v1h-1zM648 221h1v1h-1zM648 226h1v1h-1zM648 231h1v1h-1zM648 236h1v1h-1zM648 241h1v1h-1zM648 246h1v1h-1zM648 251h1v1h-1zM648 256h1v1h-1zM648 261h1v1h-1zM648 266h1v1h-1zM648 271h1v1h-1zM648 276h1v1h-1zM648 281h1v1h-1zM648 286h1v1h-1zM648 291h1v1h-1zM648 296h1v1h-1zM648 301h1v1h-1zM648 306h1v1h-1zM648 311h1v1h-1zM648 316h1v1h-1zM648 321h1v1h-1zM648 326h1v1h-1zM648 331h1v1h-1zM648 336h1v1h-1zM648 341h1v1h-1zM648 346h1v1h-1zM648 351h1v1h-1zM648 356h1v1h-1zM648 361h1v1h-1zM648 366h1v1h-1zM648 371h1v1h-1zM648 376h1v1h-1zM648 381h1v1h-1zM648 386h1v1h-1zM648 391h1v1h-1zM648 396h1v1h-1zM648 401h1v1h-1zM648 406h1v1h-1zM648 411h1v1h-1zM648 416h1v1h-1zM648 421h1v1h-1zM648 426h1v1h-1zM648 431h1v1h-1zM648 436h1v1h-1zM648 441h1v1h-1zM648 446h1v1h-1zM648 451h1v1h-1zM648 456h1v1h-1zM648 461h1v1h-1zM648 466h1v1h-1zM648 471h1v1h-1zM648 476h1v1h-1zM648 481h1v1h-1zM648 486h1v1h-1zM648 491h1v1h-1zM648 496h1v1h-1zM648 501h1v1h-1zM648 506h1v1h-1zM648 511h1v1h-1zM648 516h1v1h-1zM648 521h1v1h-1zM648 526h1v1h-1zM693 81h1v1h-1zM693 86h1v1h-1zM693 91h1v1h-1zM693 96h1v1h-1zM693 101h1v1h-1zM693 106h1v1h-1zM693 111h1v1h-1zM693 116h1v1h-1zM693 121h1v1h-1zM693 126h1v1h-1zM693 131h1v1h-1zM693 136h1v1h-1zM693 141h1v1h-1zM693 146h1v1h-1zM693 151h1v1h-1zM693 156h1v1h-1zM693 161h1v1h-1zM693 166h1v1h-1zM693 171h1v1h-1zM693 176h1v1h-1zM693 181h1v1h-1zM693 186h1v1h-1zM693 191h1v1h-1zM693 196h1v1h-1zM693 201h1v1h-1zM693 206h1v1h-1zM693 211h1v1h-1zM693 216h1v1h-1zM693 221h1v1h-1zM693 226h1v1h-1zM693 231h1v1h-1zM693 236h1v1h-1zM693 241h1v1h-1zM693 246h1v1h-1zM693 251h1v1h-1zM693 256h1v1h-1zM693 261h1v1h-1zM693 266h1v1h-1zM693 271h1v1h-1zM693 276h1v1h-1zM693 281h1v1h-1zM693 286h1v1h-1zM693 291h1v1h-1zM693 296h1v1h-1zM693 301h1v1h-1zM693 306h1v1h-1zM693 311h1v1h-1zM693 316h1v1h-1zM693 321h1v1h-1zM693 326h1v1h-1zM693 331h1v1h-1zM693 336h1v1h-1zM693 341h1v1h-1zM693 346h1v1h-1zM693 351h1v1h-1zM693 356h1v1h-1zM693 361h1v1h-1zM693 366h1v1h-1zM693 371h1v1h-1zM693 376h1v1h-1zM693 381h1v1h-1zM693 386h1v1h-1zM693 391h1v1h-1zM693 396h1v1h-1zM693 401h1v1h-1zM693 406h1v1h-1zM693 411h1v1h-1zM693 416h1v1h-1zM693 421h1v1h-1zM693 426h1v1h-1zM693 431h1v1h-1zM693 436h1v1h-1zM693 441h1v1h-1zM693 446h1v1h-1zM693 451h1v1h-1zM693 456h1v1h-1zM693 461h1v1h-1zM693 466h1v1h-1zM693 471h1v1h-1zM693 476h1v1h-1zM693 481h1v1h-1zM693 486h1v1h-1zM693 491h1v1h-1zM693 496h1v1h-1zM693 501h1v1h-1zM693 506h1v1h-1zM693 511h1v1h-1zM693 516h1v1h-1zM693 521h1v1h-1zM693 526h1v1h-1zM40 121h1v1h-1zM45 121h1v1h-1zM50 121h1v1h-1zM55 121h1v1h-1zM60 121h1v1h-1zM65 121h1v1h-1zM70 121h1v1h-1zM75 121h1v1h-1zM80 121h1v1h-1zM85 121h1v1h-1zM90 121h1v1h-1zM95 121h1v1h-1zM100 121h1v1h-1zM105 121h1v1h-1zM110 121h1v1h-1zM115 121h1v1h-1zM120 121h1v1h-1zM125 121h1v1h-1zM130 121h1v1h-1zM135 121h1v1h-1zM140 121h1v1h-1zM145 121h1v1h-1zM150 121h1v1h-1zM155 121h1v1h-1zM160 121h1v1h-1zM165 121h1v1h-1zM170 121h1v1h-1zM175 121h1v1h-1zM180 121h1v1h-1zM185 121h1v1h-1zM190 121h1v1h-1zM195 121h1v1h-1zM200 121h1v1h-1zM205 121h1v1h-1zM210 121h1v1h-1zM215 121h1v1h-1zM220 121h1v1h-1zM225 121h1v1h-1zM230 121h1v1h-1zM235 121h1v1h-1zM240 121h1v1h-1zM245 121h1v1h-1zM250 121h1v1h-1zM255 121h1v1h-1zM260 121h1v1h-1zM265 121h1v1h-1zM270 121h1v1h-1zM275 121h1v1h-1zM280 121h1v1h-1zM285 121h1v1h-1zM290 121h1v1h-1zM295 121h1v1h-1zM300 121h1v1h-1zM305 121h1v1h-1zM310 121h1v1h-1zM315 121h1v1h-1zM320 121h1v1h-1zM325 121h1v1h-1zM330 121h1v1h-1zM335 121h1v1h-1zM340 121h1v1h-1zM345 121h1v1h-1zM350 121h1v1h-1zM355 121h1v1h-1zM360 121h1v1h-1zM365 121h1v1h-1zM370 121h1v1h-1zM375 121h1v1h-1zM380 121h1v1h-1zM385 121h1v1h-1zM390 121h1v1h-1zM395 121h1v1h-1zM400 121h1v1h-1zM405 121h1v1h-1zM410 121h1v1h-1zM415 121h1v1h-1zM420 121h1v1h-1zM425 121h1v1h-1zM430 121h1v1h-1zM435 121h1v1h-1zM440 121h1v1h-1zM445 121h1v1h-1zM450 121h1v1h-1zM455 121h1v1h-1zM460 121h1v1h-1zM465 121h1v1h-1zM470 121h1v1h-1zM475 121h1v1h-1zM480 121h1v1h-1zM485 121h1v1h-1zM490 121h1v1h-1zM495 121h1v1h-1zM500 121h1v1h-1zM505 121h1v1h-1zM510 121h1v1h-1zM515 121h1v1h-1zM520 121h1v1h-1zM525 121h1v1h-1zM530 121h1v1h-1zM535 121h1v1h-1zM540 121h1v1h-1zM545 121h1v1h-1zM550 121h1v1h-1zM555 121h1v1h-1zM560 121h1v1h-1zM565 121h1v1h-1zM570 121h1v1h-1zM575 121h1v1h-1zM580 121h1v1h-1zM585 121h1v1h-1zM590 121h1v1h-1zM595 121h1v1h-1zM600 121h1v1h-1zM605 121h1v1h-1zM610 121h1v1h-1zM615 121h1v1h-1zM620 121h1v1h-1zM625 121h1v1h-1zM630 121h1v1h-1zM635 121h1v1h-1zM640 121h1v1h-1zM645 121h1v1h-1zM650 121h1v1h-1zM655 121h1v1h-1zM660 121h1v1h-1zM665 121h1v1h-1zM670 121h1v1h-1zM675 121h1v1h-1zM680 121h1v1h-1zM685 121h1v1h-1zM690 121h1v1h-1zM695 121h1v1h-1zM700 121h1v1h-1zM705 121h1v1h-1zM710 121h1v1h-1zM715 121h1v1h-1zM40 167h1v1h-1zM45 167h1v1h-1zM50 167h1v1h-1zM55 167h1v1h-1zM60 167h1v1h-1zM65 167h1v1h-1zM70 167h1v1h-1zM75 167h1v1h-1zM80 167h1v1h-1zM85 167h1v1h-1zM90 167h1v1h-1zM95 167h1v1h-1zM100 167h1v1h-1zM105 167h1v1h-1zM110 167h1v1h-1zM115 167h1v1h-1zM120 167h1v1h-1zM125 167h1v1h-1zM130 167h1v1h-1zM135 167h1v1h-1zM140 167h1v1h-1zM145 167h1v1h-1zM150 167h1v1h-1zM155 167h1v1h-1zM160 167h1v1h-1zM165 167h1v1h-1zM170 167h1v1h-1zM175 167h1v1h-1zM180 167h1v1h-1zM185 167h1v1h-1zM190 167h1v1h-1zM195 167h1v1h-1zM200 167h1v1h-1zM205 167h1v1h-1zM210 167h1v1h-1zM215 167h1v1h-1zM220 167h1v1h-1zM225 167h1v1h-1zM230 167h1v1h-1zM235 167h1v1h-1zM240 167h1v1h-1zM245 167h1v1h-1zM250 167h1v1h-1zM255 167h1v1h-1zM260 167h1v1h-1zM265 167h1v1h-1zM270 167h1v1h-1zM275 167h1v1h-1zM280 167h1v1h-1zM285 167h1v1h-1zM290 167h1v1h-1zM295 167h1v1h-1zM300 167h1v1h-1zM305 167h1v1h-1zM310 167h1v1h-1zM315 167h1v1h-1zM320 167h1v1h-1zM325 167h1v1h-1zM330 167h1v1h-1zM335 167h1v1h-1zM340 167h1v1h-1zM345 167h1v1h-1zM350 167h1v1h-1zM355 167h1v1h-1zM360 167h1v1h-1zM365 167h1v1h-1zM370 167h1v1h-1zM375 167h1v1h-1zM380 167h1v1h-1zM385 167h1v1h-1zM390 167h1v1h-1zM395 167h1v1h-1zM400 167h1v1h-1zM405 167h1v1h-1zM410 167h1v1h-1zM415 167h1v1h-1zM420 167h1v1h-1zM425 167h1v1h-1zM430 167h1v1h-1zM435 167h1v1h-1zM440 167h1v1h-1zM445 167h1v1h-1zM450 167h1v1h-1zM455 167h1v1h-1zM460 167h1v1h-1zM465 167h1v1h-1zM470 167h1v1h-1zM475 167h1v1h-1zM480 167h1v1h-1zM485 167h1v1h-1zM490 167h1v1h-1zM495 167h1v1h-1zM500 167h1v1h-1zM505 167h1v1h-1zM510 167h1v1h-1zM515 167h1v1h-1zM520 167h1v1h-1zM525 167h1v1h-1zM530 167h1v1h-1zM535 167h1v1h-1zM540 167h1v1h-1zM545 167h1v1h-1zM550 167h1v1h-1zM555 167h1v1h-1zM560 167h1v1h-1zM565 167h1v1h-1zM570 167h1v1h-1zM575 167h1v1h-1zM580 167h1v1h-1zM585 167h1v1h-1zM590 167h1v1h-1zM595 167h1v1h-1zM600 167h1v1h-1zM605 167h1v1h-1zM610 167h1v1h-1zM615 167h1v1h-1zM620 167h1v1h-1zM625 167h1v1h-1zM630 167h1v1h-1zM635 167h1v1h-1zM640 167h1v1h-1zM645 167h1v1h-1zM650 167h1v1h-1zM655 167h1v1h-1zM660 167h1v1h-1zM665 167h1v1h-1zM670 167h1v1h-1zM675 167h1v1h-1zM680 167h1v1h-1zM685 167h1v1h-1zM690 167h1v1h-1zM695 167h1v1h-1zM700 167h1v1h-1zM705 167h1v1h-1zM710 167h1v1h-1zM715 167h1v1h-1zM40 212h1v1h-1zM45 212h1v1h-1zM50 212h1v1h-1zM55 212h1v1h-1zM60 212h1v1h-1zM65 212h1v1h-1zM70 212h1v1h-1zM75 212h1v1h-1zM80 212h1v1h-1zM85 212h1v1h-1zM90 212h1v1h-1zM95 212h1v1h-1zM100 212h1v1h-1zM105 212h1v1h-1zM110 212h1v1h-1zM115 212h1v1h-1zM120 212h1v1h-1zM125 212h1v1h-1zM130 212h1v1h-1zM135 212h1v1h-1zM140 212h1v1h-1zM145 212h1v1h-1zM150 212h1v1h-1zM155 212h1v1h-1zM160 212h1v1h-1zM165 212h1v1h-1zM170 212h1v1h-1zM175 212h1v1h-1zM180 212h1v1h-1zM185 212h1v1h-1zM190 212h1v1h-1zM195 212h1v1h-1zM200 212h1v1h-1zM205 212h1v1h-1zM210 212h1v1h-1zM215 212h1v1h-1zM220 212h1v1h-1zM225 212h1v1h-1zM230 212h1v1h-1zM235 212h1v1h-1zM240 212h1v1h-1zM245 212h1v1h-1zM250 212h1v1h-1zM255 212h1v1h-1zM260 212h1v1h-1zM265 212h1v1h-1zM270 212h1v1h-1zM275 212h1v1h-1zM280 212h1v1h-1zM285 212h1v1h-1zM290 212h1v1h-1zM295 212h1v1h-1zM300 212h1v1h-1zM305 212h1v1h-1zM310 212h1v1h-1zM315 212h1v1h-1zM320 212h1v1h-1zM325 212h1v1h-1zM330 212h1v1h-1zM335 212h1v1h-1zM340 212h1v1h-1zM345 212h1v1h-1zM350 212h1v1h-1zM355 212h1v1h-1zM360 212h1v1h-1zM365 212h1v1h-1zM370 212h1v1h-1zM375 212h1v1h-1zM380 212h1v1h-1zM385 212h1v1h-1zM390 212h1v1h-1zM395 212h1v1h-1zM400 212h1v1h-1zM405 212h1v1h-1zM410 212h1v1h-1zM415 212h1v1h-1zM420 212h1v1h-1zM425 212h1v1h-1zM430 212h1v1h-1zM435 212h1v1h-1zM440 212h1v1h-1zM445 212h1v1h-1zM450 212h1v1h-1zM455 212h1v1h-1zM460 212h1v1h-1zM465 212h1v1h-1zM470 212h1v1h-1zM475 212h1v1h-1zM480 212h1v1h-1zM485 212h1v1h-1zM490 212h1v1h-1zM495 212h1v1h-1zM500 212h1v1h-1zM505 212h1v1h-1zM510 212h1v1h-1zM515 212h1v1h-1zM520 212h1v1h-1zM525 212h1v1h-1zM530 212h1v1h-1zM535 212h1v1h-1zM540 212h1v1h-1zM545 212h1v1h-1zM550 212h1v1h-1zM555 212h1v1h-1zM560 212h1v1h-1zM565 212h1v1h-1zM570 212h1v1h-1zM575 212h1v1h-1zM580 212h1v1h-1zM585 212h1v1h-1zM590 212h1v1h-1zM595 212h1v1h-1zM600 212h1v1h-1zM605 212h1v1h-1zM610 212h1v1h-1zM615 212h1v1h-1zM620 212h1v1h-1zM625 212h1v1h-1zM630 212h1v1h-1zM635 212h1v1h-1zM640 212h1v1h-1zM645 212h1v1h-1zM650 212h1v1h-1zM655 212h1v1h-1zM660 212h1v1h-1zM665 212h1v1h-1zM670 212h1v1h-1zM675 212h1v1h-1zM680 212h1v1h-1zM685 212h1v1h-1zM690 212h1v1h-1zM695 212h1v1h-1zM700 212h1v1h-1zM705 212h1v1h-1zM710 212h1v1h-1zM715 212h1v1h-1zM40 258h1v1h-1zM45 258h1v1h-1zM50 258h1v1h-1zM55 258h1v1h-1zM60 258h1v1h-1zM65 258h1v1h-1zM70 258h1v1h-1zM75 258h1v1h-1zM80 258h1v1h-1zM85 258h1v1h-1zM90 258h1v1h-1zM95 258h1v1h-1zM100 258h1v1h-1zM105 258h1v1h-1zM110 258h1v1h-1zM115 258h1v1h-1zM120 258h1v1h-1zM125 258h1v1h-1zM130 258h1v1h-1zM135 258h1v1h-1zM140 258h1v1h-1zM145 258h1v1h-1zM150 258h1v1h-1zM155 258h1v1h-1zM160 258h1v1h-1zM165 258h1v1h-1zM170 258h1v1h-1zM175 258h1v1h-1zM180 258h1v1h-1zM185 258h1v1h-1zM190 258h1v1h-1zM195 258h1v1h-1zM200 258h1v1h-1zM205 258h1v1h-1zM210 258h1v1h-1zM215 258h1v1h-1zM220 258h1v1h-1zM225 258h1v1h-1zM230 258h1v1h-1zM235 258h1v1h-1zM240 258h1v1h-1zM245 258h1v1h-1zM250 258h1v1h-1zM255 258h1v1h-1zM260 258h1v1h-1zM265 258h1v1h-1zM270 258h1v1h-1zM275 258h1v1h-1zM280 258h1v1h-1zM285 258h1v1h-1zM290 258h1v1h-1zM295 258h1v1h-1zM300 258h1v1h-1zM305 258h1v1h-1zM310 258h1v1h-1zM315 258h1v1h-1zM320 258h1v1h-1zM325 258h1v1h-1zM330 258h1v1h-1zM335 258h1v1h-1zM340 258h1v1h-1zM345 258h1v1h-1zM350 258h1v1h-1zM355 258h1v1h-1zM360 258h1v1h-1zM365 258h1v1h-1zM370 258h1v1h-1zM375 258h1v1h-1zM380 258h1v1h-1zM385 258h1v1h-1zM390 258h1v1h-1zM395 258h1v1h-1zM400 258h1v1h-1zM405 258h1v1h-1zM410 258h1v1h-1zM415 258h1v1h-1zM420 258h1v1h-1zM425 258h1v1h-1zM430 258h1v1h-1zM435 258h1v1h-1zM440 258h1v1h-1zM445 258h1v1h-1zM450 258h1v1h-1zM455 258h1v1h-1zM460 258h1v1h-1zM465 258h1v1h-1zM470 258h1v1h-1zM475 258h1v1h-1zM480 258h1v1h-1zM485 258h1v1h-1zM490 258h1v1h-1zM495 258h1v1h-1zM500 258h1v1h-1zM505 258h1v1h-1zM510 258h1v1h-1zM515 258h1v1h-1zM520 258h1v1h-1zM525 258h1v1h-1zM530 258h1v1h-1zM535 258h1v1h-1zM540 258h1v1h-1zM545 258h1v1h-1zM550 258h1v1h-1zM555 258h1v1h-1zM560 258h1v1h-1zM565 258h1v1h-1zM570 258h1v1h-1zM575 258h1v1h-1zM580 258h1v1h-1zM585 258h1v1h-1zM590 258h1v1h-1zM595 258h1v1h-1zM600 258h1v1h-1zM605 258h1v1h-1zM610 258h1v1h-1zM615 258h1v1h-1zM620 258h1v1h-1zM625 258h1v1h-1zM630 258h1v1h-1zM635 258h1v1h-1zM640 258h1v1h-1zM645 258h1v1h-1zM650 258h1v1h-1zM655 258h1v1h-1zM660 258h1v1h-1zM665 258h1v1h-1zM670 258h1v1h-1zM675 258h1v1h-1zM680 258h1v1h-1zM685 258h1v1h-1zM690 258h1v1h-1zM695 258h1v1h-1zM700 258h1v1h-1zM705 258h1v1h-1zM710 258h1v1h-1zM715 258h1v1h-1zM40 349h1v1h-1zM45 349h1v1h-1zM50 349h1v1h-1zM55 349h1v1h-1zM60 349h1v1h-1zM65 349h1v1h-1zM70 349h1v1h-1zM75 349h1v1h-1zM80 349h1v1h-1zM85 349h1v1h-1zM90 349h1v1h-1zM95 349h1v1h-1zM100 349h1v1h-1zM105 349h1v1h-1zM110 349h1v1h-1zM115 349h1v1h-1zM120 349h1v1h-1zM125 349h1v1h-1zM130 349h1v1h-1zM135 349h1v1h-1zM140 349h1v1h-1zM145 349h1v1h-1zM150 349h1v1h-1zM155 349h1v1h-1zM160 349h1v1h-1zM165 349h1v1h-1zM170 349h1v1h-1zM175 349h1v1h-1zM180 349h1v1h-1zM185 349h1v1h-1zM190 349h1v1h-1zM195 349h1v1h-1zM200 349h1v1h-1zM205 349h1v1h-1zM210 349h1v1h-1zM215 349h1v1h-1zM220 349h1v1h-1zM225 349h1v1h-1zM230 349h1v1h-1zM235 349h1v1h-1zM240 349h1v1h-1zM245 349h1v1h-1zM250 349h1v1h-1zM255 349h1v1h-1zM260 349h1v1h-1zM265 349h1v1h-1zM270 349h1v1h-1zM275 349h1v1h-1zM280 349h1v1h-1zM285 349h1v1h-1zM290 349h1v1h-1zM295 349h1v1h-1zM300 349h1v1h-1zM305 349h1v1h-1zM310 349h1v1h-1zM315 349h1v1h-1zM320 349h1v1h-1zM325 349h1v1h-1zM330 349h1v1h-1zM335 349h1v1h-1zM340 349h1v1h-1zM345 349h1v1h-1zM350 349h1v1h-1zM355 349h1v1h-1zM360 349h1v1h-1zM365 349h1v1h-1zM370 349h1v1h-1zM375 349h1v1h-1zM380 349h1v1h-1zM385 349h1v1h-1zM390 349h1v1h-1zM395 349h1v1h-1zM400 349h1v1h-1zM405 349h1v1h-1zM410 349h1v1h-1zM415 349h1v1h-1zM420 349h1v1h-1zM425 349h1v1h-1zM430 349h1v1h-1zM435 349h1v1h-1zM440 349h1v1h-1zM445 349h1v1h-1zM450 349h1v1h-1zM455 349h1v1h-1zM460 349h1v1h-1zM465 349h1v1h-1zM470 349h1v1h-1zM475 349h1v1h-1zM480 349h1v1h-1zM485 349h1v1h-1zM490 349h1v1h-1zM495 349h1v1h-1zM500 349h1v1h-1zM505 349h1v1h-1zM510 349h1v1h-1zM515 349h1v1h-1zM520 349h1v1h-1zM525 349h1v1h-1zM530 349h1v1h-1zM535 349h1v1h-1zM540 349h1v1h-1zM545 349h1v1h-1zM550 349h1v1h-1zM555 349h1v1h-1zM560 349h1v1h-1zM565 349h1v1h-1zM570 349h1v1h-1zM575 349h1v1h-1zM580 349h1v1h-1zM585 349h1v1h-1zM590 349h1v1h-1zM595 349h1v1h-1zM600 349h1v1h-1zM605 349h1v1h-1zM610 349h1v1h-1zM615 349h1v1h-1zM620 349h1v1h-1zM625 349h1v1h-1zM630 349h1v1h-1zM635 349h1v1h-1zM640 349h1v1h-1zM645 349h1v1h-1zM650 349h1v1h-1zM655 349h1v1h-1zM660 349h1v1h-1zM665 349h1v1h-1zM670 349h1v1h-1zM675 349h1v1h-1zM680 349h1v1h-1zM685 349h1v1h-1zM690 349h1v1h-1zM695 349h1v1h-1zM700 349h1v1h-1zM705 349h1v1h-1zM710 349h1v1h-1zM715 349h1v1h-1zM40 395h1v1h-1zM45 395h1v1h-1zM50 395h1v1h-1zM55 395h1v1h-1zM60 395h1v1h-1zM65 395h1v1h-1zM70 395h1v1h-1zM75 395h1v1h-1zM80 395h1v1h-1zM85 395h1v1h-1zM90 395h1v1h-1zM95 395h1v1h-1zM100 395h1v1h-1zM105 395h1v1h-1zM110 395h1v1h-1zM115 395h1v1h-1zM120 395h1v1h-1zM125 395h1v1h-1zM130 395h1v1h-1zM135 395h1v1h-1zM140 395h1v1h-1zM145 395h1v1h-1zM150 395h1v1h-1zM155 395h1v1h-1zM160 395h1v1h-1zM165 395h1v1h-1zM170 395h1v1h-1zM175 395h1v1h-1zM180 395h1v1h-1zM185 395h1v1h-1zM190 395h1v1h-1zM195 395h1v1h-1zM200 395h1v1h-1zM205 395h1v1h-1zM210 395h1v1h-1zM215 395h1v1h-1zM220 395h1v1h-1zM225 395h1v1h-1zM230 395h1v1h-1zM235 395h1v1h-1zM240 395h1v1h-1zM245 395h1v1h-1zM250 395h1v1h-1zM255 395h1v1h-1zM260 395h1v1h-1zM265 395h1v1h-1zM270 395h1v1h-1zM275 395h1v1h-1zM280 395h1v1h-1zM285 395h1v1h-1zM290 395h1v1h-1zM295 395h1v1h-1zM300 395h1v1h-1zM305 395h1v1h-1zM310 395h1v1h-1zM315 395h1v1h-1zM320 395h1v1h-1zM325 395h1v1h-1zM330 395h1v1h-1zM335 395h1v1h-1zM340 395h1v1h-1zM345 395h1v1h-1zM350 395h1v1h-1zM355 395h1v1h-1zM360 395h1v1h-1zM365 395h1v1h-1zM370 395h1v1h-1zM375 395h1v1h-1zM380 395h1v1h-1zM385 395h1v1h-1zM390 395h1v1h-1zM395 395h1v1h-1zM400 395h1v1h-1zM405 395h1v1h-1zM410 395h1v1h-1zM415 395h1v1h-1zM420 395h1v1h-1zM425 395h1v1h-1zM430 395h1v1h-1zM435 395h1v1h-1zM440 395h1v1h-1zM445 395h1v1h-1zM450 395h1v1h-1zM455 395h1v1h-1zM460 395h1v1h-1zM465 395h1v1h-1zM470 395h1v1h-1zM475 395h1v1h-1zM480 395h1v1h-1zM485 395h1v1h-1zM490 395h1v1h-1zM495 395h1v1h-1zM500 395h1v1h-1zM505 395h1v1h-1zM510 395h1v1h-1zM515 395h1v1h-1zM520 395h1v1h-1zM525 395h1v1h-1zM530 395h1v1h-1zM535 395h1v1h-1zM540 395h1v1h-1zM545 395h1v1h-1zM550 395h1v1h-1zM555 395h1v1h-1zM560 395h1v1h-1zM565 395h1v1h-1zM570 395h1v1h-1zM575 395h1v1h-1zM580 395h1v1h-1zM585 395h1v1h-1zM590 395h1v1h-1zM595 395h1v1h-1zM600 395h1v1h-1zM605 395h1v1h-1zM610 395h1v1h-1zM615 395h1v1h-1zM620 395h1v1h-1zM625 395h1v1h-1zM630 395h1v1h-1zM635 395h1v1h-1zM640 395h1v1h-1zM645 395h1v1h-1zM650 395h1v1h-1zM655 395h1v1h-1zM660 395h1v1h-1zM665 395h1v1h-1zM670 395h1v1h-1zM675 395h1v1h-1zM680 395h1v1h-1zM685 395h1v1h-1zM690 395h1v1h-1zM695 395h1v1h-1zM700 395h1v1h-1zM705 395h1v1h-1zM710 395h1v1h-1zM715 395h1v1h-1zM40 440h1v1h-1zM45 440h1v1h-1zM50 440h1v1h-1zM55 440h1v1h-1zM60 440h1v1h-1zM65 440h1v1h-1zM70 440h1v1h-1zM75 440h1v1h-1zM80 440h1v1h-1zM85 440h1v1h-1zM90 440h1v1h-1zM95 440h1v1h-1zM100 440h1v1h-1zM105 440h1v1h-1zM110 440h1v1h-1zM115 440h1v1h-1zM120 440h1v1h-1zM125 440h1v1h-1zM130 440h1v1h-1zM135 440h1v1h-1zM140 440h1v1h-1zM145 440h1v1h-1zM150 440h1v1h-1zM155 440h1v1h-1zM160 440h1v1h-1zM165 440h1v1h-1zM170 440h1v1h-1zM175 440h1v1h-1zM180 440h1v1h-1zM185 440h1v1h-1zM190 440h1v1h-1zM195 440h1v1h-1zM200 440h1v1h-1zM205 440h1v1h-1zM210 440h1v1h-1zM215 440h1v1h-1zM220 440h1v1h-1zM225 440h1v1h-1zM230 440h1v1h-1zM235 440h1v1h-1zM240 440h1v1h-1zM245 440h1v1h-1zM250 440h1v1h-1zM255 440h1v1h-1zM260 440h1v1h-1zM265 440h1v1h-1zM270 440h1v1h-1zM275 440h1v1h-1zM280 440h1v1h-1zM285 440h1v1h-1zM290 440h1v1h-1zM295 440h1v1h-1zM300 440h1v1h-1zM305 440h1v1h-1zM310 440h1v1h-1zM315 440h1v1h-1zM320 440h1v1h-1zM325 440h1v1h-1zM330 440h1v1h-1zM335 440h1v1h-1zM340 440h1v1h-1zM345 440h1v1h-1zM350 440h1v1h-1zM355 440h1v1h-1zM360 440h1v1h-1zM365 440h1v1h-1zM370 440h1v1h-1zM375 440h1v1h-1zM380 440h1v1h-1zM385 440h1v1h-1zM390 440h1v1h-1zM395 440h1v1h-1zM400 440h1v1h-1zM405 440h1v1h-1zM410 440h1v1h-1zM415 440h1v1h-1zM420 440h1v1h-1zM425 440h1v1h-1zM430 440h1v1h-1zM435 440h1v1h-1zM440 440h1v1h-1zM445 440h1v1h-1zM450 440h1v1h-1zM455 440h1v1h-1zM460 440h1v1h-1zM465 440h1v1h-1zM470 440h1v1h-1zM475 440h1v1h-1zM480 440h1v1h-1zM485 440h1v1h-1zM490 440h1v1h-1zM495 440h1v1h-1zM500 440h1v1h-1zM505 440h1v1h-1zM510 440h1v1h-1zM515 440h1v1h-1zM520 440h1v1h-1zM525 440h1v1h-1zM530 440h1v1h-1zM535 440h1v1h-1zM540 440h1v1h-1zM545 440h1v1h-1zM550 440h1v1h-1zM555 440h1v1h-1zM560 440h1v1h-1zM565 440h1v1h-1zM570 440h1v1h-1zM575 440h1v1h-1zM580 440h1v1h-1zM585 440h1v1h-1zM590 440h1v1h-1zM595 440h1v1h-1zM600 440h1v1h-1zM605 440h1v1h-1zM610 440h1v1h-1zM615 440h1v1h-1zM620 440h1v1h-1zM625 440h1v1h-1zM630 440h1v1h-1zM635 440h1v1h-1zM640 440h1v1h-1zM645 440h1v1h-1zM650 440h1v1h-1zM655 440h1v1h-1zM660 440h1v1h-1zM665 440h1v1h-1zM670 440h1v1h-1zM675 440h1v1h-1zM680 440h1v1h-1zM685 440h1v1h-1zM690 440h1v1h-1zM695 440h1v1h-1zM700 440h1v1h-1zM705 440h1v1h-1zM710 440h1v1h-1zM715 440h1v1h-1zM40 486h1v1h-1zM45 486h1v1h-1zM50 486h1v1h-1zM55 486h1v1h-1zM60 486h1v1h-1zM65 486h1v1h-1zM70 486h1v1h-1zM75 486h1v1h-1zM80 486h1v1h-1zM85 486h1v1h-1zM90 486h1v1h-1zM95 486h1v1h-1zM100 486h1v1h-1zM105 486h1v1h-1zM110 486h1v1h-1zM115 486h1v1h-1zM120 486h1v1h-1zM125 486h1v1h-1zM130 486h1v1h-1zM135 486h1v1h-1zM140 486h1v1h-1zM145 486h1v1h-1zM150 486h1v1h-1zM155 486h1v1h-1zM160 486h1v1h-1zM165 486h1v1h-1zM170 486h1v1h-1zM175 486h1v1h-1zM180 486h1v1h-1zM185 486h1v1h-1zM190 486h1v1h-1zM195 486h1v1h-1zM200 486h1v1h-1zM205 486h1v1h-1zM210 486h1v1h-1zM215 486h1v1h-1zM220 486h1v1h-1zM225 486h1v1h-1zM230 486h1v1h-1zM235 486h1v1h-1zM240 486h1v1h-1zM245 486h1v1h-1zM250 486h1v1h-1zM255 486h1v1h-1zM260 486h1v1h-1zM265 486h1v1h-1zM270 486h1v1h-1zM275 486h1v1h-1zM280 486h1v1h-1zM285 486h1v1h-1zM290 486h1v1h-1zM295 486h1v1h-1zM300 486h1v1h-1zM305 486h1v1h-1zM310 486h1v1h-1zM315 486h1v1h-1zM320 486h1v1h-1zM325 486h1v1h-1zM330 486h1v1h-1zM335 486h1v1h-1zM340 486h1v1h-1zM345 486h1v1h-1zM350 486h1v1h-1zM355 486h1v1h-1zM360 486h1v1h-1zM365 486h1v1h-1zM370 486h1v1h-1zM375 486h1v1h-1zM380 486h1v1h-1zM385 486h1v1h-1zM390 486h1v1h-1zM395 486h1v1h-1zM400 486h1v1h-1zM405 486h1v1h-1zM410 486h1v1h-1zM415 486h1v1h-1zM420 486h1v1h-1zM425 486h1v1h-1zM430 486h1v1h-1zM435 486h1v1h-1zM440 486h1v1h-1zM445 486h1v1h-1zM450 486h1v1h-1zM455 486h1v1h-1zM460 486h1v1h-1zM465 486h1v1h-1zM470 486h1v1h-1zM475 486h1v1h-1zM480 486h1v1h-1zM485 486h1v1h-1zM490 486h1v1h-1zM495 486h1v1h-1zM500 486h1v1h-1zM505 486h1v1h-1zM510 486h1v1h-1zM515 486h1v1h-1zM520 486h1v1h-1zM525 486h1v1h-1zM530 486h1v1h-1zM535 486h1v1h-1zM540 486h1v1h-1zM545 486h1v1h-1zM550 486h1v1h-1zM555 486h1v1h-1zM560 486h1v1h-1zM565 486h1v1h-1zM570 486h1v1h-1zM575 486h1v1h-1zM580 486h1v1h-1zM585 486h1v1h-1zM590 486h1v1h-1zM595 486h1v1h-1zM600 486h1v1h-1zM605 486h1v1h-1zM610 486h1v1h-1zM615 486h1v1h-1zM620 486h1v1h-1zM625 486h1v1h-1zM630 486h1v1h-1zM635 486h1v1h-1zM640 486h1v1h-1zM645 486h1v1h-1zM650 486h1v1h-1zM655 486h1v1h-1zM660 486h1v1h-1zM665 486h1v1h-1zM670 486h1v1h-1zM675 486h1v1h-1zM680 486h1v1h-1zM685 486h1v1h-1zM690 486h1v1h-1zM695 486h1v1h-1zM700 486h1v1h-1zM705 486h1v1h-1zM710 486h1v1h-1zM715 486h1v1h-1z" fill="#b4b8d0"/><rect x="36" y="304" width="684" height="1" fill="#c8cce2"/><rect x="378" y="77" width="1" height="454" fill="#c8cce2"/><path d="M44 302h1v5h-1zM44 77h1v2h-1zM44 529h1v2h-1zM53 302h1v5h-1zM53 77h1v2h-1zM53 529h1v2h-1zM62 300h1v9h-1zM62 77h1v5h-1zM62 526h1v5h-1zM71 302h1v5h-1zM71 77h1v2h-1zM71 529h1v2h-1zM80 302h1v5h-1zM80 77h1v2h-1zM80 529h1v2h-1zM89 302h1v5h-1zM89 77h1v2h-1zM89 529h1v2h-1zM98 302h1v5h-1zM98 77h1v2h-1zM98 529h1v2h-1zM107 300h1v9h-1zM107 77h1v5h-1zM107 526h1v5h-1zM116 302h1v5h-1zM116 77h1v2h-1zM116 529h1v2h-1zM125 302h1v5h-1zM125 77h1v2h-1zM125 529h1v2h-1zM134 302h1v5h-1zM134 77h1v2h-1zM134 529h1v2h-1zM143 302h1v5h-1zM143 77h1v2h-1zM143 529h1v2h-1zM152 300h1v9h-1zM152 77h1v5h-1zM152 526h1v5h-1zM161 302h1v5h-1zM161 77h1v2h-1zM161 529h1v2h-1zM170 302h1v5h-1zM170 77h1v2h-1zM170 529h1v2h-1zM179 302h1v5h-1zM179 77h1v2h-1zM179 529h1v2h-1zM188 302h1v5h-1zM188 77h1v2h-1zM188 529h1v2h-1zM197 300h1v9h-1zM197 77h1v5h-1zM197 526h1v5h-1zM206 302h1v5h-1zM206 77h1v2h-1zM206 529h1v2h-1zM215 302h1v5h-1zM215 77h1v2h-1zM215 529h1v2h-1zM224 302h1v5h-1zM224 77h1v2h-1zM224 529h1v2h-1zM233 302h1v5h-1zM233 77h1v2h-1zM233 529h1v2h-1zM242 300h1v9h-1zM242 77h1v5h-1zM242 526h1v5h-1zM251 302h1v5h-1zM251 77h1v2h-1zM251 529h1v2h-1zM260 302h1v5h-1zM260 77h1v2h-1zM260 529h1v2h-1zM269 302h1v5h-1zM269 77h1v2h-1zM269 529h1v2h-1zM278 302h1v5h-1zM278 77h1v2h-1zM278 529h1v2h-1zM288 300h1v9h-1zM288 77h1v5h-1zM288 526h1v5h-1zM297 302h1v5h-1zM297 77h1v2h-1zM297 529h1v2h-1zM306 302h1v5h-1zM306 77h1v2h-1zM306 529h1v2h-1zM315 302h1v5h-1zM315 77h1v2h-1zM315 529h1v2h-1zM324 302h1v5h-1zM324 77h1v2h-1zM324 529h1v2h-1zM333 300h1v9h-1zM333 77h1v5h-1zM333 526h1v5h-1zM342 302h1v5h-1zM342 77h1v2h-1zM342 529h1v2h-1zM351 302h1v5h-1zM351 77h1v2h-1zM351 529h1v2h-1zM360 302h1v5h-1zM360 77h1v2h-1zM360 529h1v2h-1zM369 302h1v5h-1zM369 77h1v2h-1zM369 529h1v2h-1zM378 300h1v9h-1zM378 77h1v5h-1zM378 526h1v5h-1zM387 302h1v5h-1zM387 77h1v2h-1zM387 529h1v2h-1zM396 302h1v5h-1zM396 77h1v2h-1zM396 529h1v2h-1zM405 302h1v5h-1zM405 77h1v2h-1zM405 529h1v2h-1zM414 302h1v5h-1zM414 77h1v2h-1zM414 529h1v2h-1zM423 300h1v9h-1zM423 77h1v5h-1zM423 526h1v5h-1zM432 302h1v5h-1zM432 77h1v2h-1zM432 529h1v2h-1zM441 302h1v5h-1zM441 77h1v2h-1zM441 529h1v2h-1zM450 302h1v5h-1zM450 77h1v2h-1zM450 529h1v2h-1zM459 302h1v5h-1zM459 77h1v2h-1zM459 529h1v2h-1zM468 300h1v9h-1zM468 77h1v5h-1zM468 526h1v5h-1zM477 302h1v5h-1zM477 77h1v2h-1zM477 529h1v2h-1zM486 302h1v5h-1zM486 77h1v2h-1zM486 529h1v2h-1zM495 302h1v5h-1zM495 77h1v2h-1zM495 529h1v2h-1zM504 302h1v5h-1zM504 77h1v2h-1zM504 529h1v2h-1zM513 300h1v9h-1zM513 77h1v5h-1zM513 526h1v5h-1zM522 302h1v5h-1zM522 77h1v2h-1zM522 529h1v2h-1zM531 302h1v5h-1zM531 77h1v2h-1zM531 529h1v2h-1zM540 302h1v5h-1zM540 77h1v2h-1zM540 529h1v2h-1zM549 302h1v5h-1zM549 77h1v2h-1zM549 529h1v2h-1zM558 300h1v9h-1zM558 77h1v5h-1zM558 526h1v5h-1zM567 302h1v5h-1zM567 77h1v2h-1zM567 529h1v2h-1zM576 302h1v5h-1zM576 77h1v2h-1zM576 529h1v2h-1zM585 302h1v5h-1zM585 77h1v2h-1zM585 529h1v2h-1zM594 302h1v5h-1zM594 77h1v2h-1zM594 529h1v2h-1zM603 300h1v9h-1zM603 77h1v5h-1zM603 526h1v5h-1zM612 302h1v5h-1zM612 77h1v2h-1zM612 529h1v2h-1zM621 302h1v5h-1zM621 77h1v2h-1zM621 529h1v2h-1zM630 302h1v5h-1zM630 77h1v2h-1zM630 529h1v2h-1zM639 302h1v5h-1zM639 77h1v2h-1zM639 529h1v2h-1zM648 300h1v9h-1zM648 77h1v5h-1zM648 526h1v5h-1zM657 302h1v5h-1zM657 77h1v2h-1zM657 529h1v2h-1zM666 302h1v5h-1zM666 77h1v2h-1zM666 529h1v2h-1zM675 302h1v5h-1zM675 77h1v2h-1zM675 529h1v2h-1zM684 302h1v5h-1zM684 77h1v2h-1zM684 529h1v2h-1zM693 300h1v9h-1zM693 77h1v5h-1zM693 526h1v5h-1zM702 302h1v5h-1zM702 77h1v2h-1zM702 529h1v2h-1zM711 302h1v5h-1zM711 77h1v2h-1zM711 529h1v2h-1zM376 85h5v1h-5zM36 85h3v1h-3zM717 85h3v1h-3zM376 94h5v1h-5zM36 94h3v1h-3zM717 94h3v1h-3zM376 103h5v1h-5zM36 103h3v1h-3zM717 103h3v1h-3zM376 112h5v1h-5zM36 112h3v1h-3zM717 112h3v1h-3zM375 121h7v1h-7zM36 121h5v1h-5zM715 121h5v1h-5zM376 131h5v1h-5zM36 131h3v1h-3zM717 131h3v1h-3zM376 140h5v1h-5zM36 140h3v1h-3zM717 140h3v1h-3zM376 149h5v1h-5zM36 149h3v1h-3zM717 149h3v1h-3zM376 158h5v1h-5zM36 158h3v1h-3zM717 158h3v1h-3zM375 167h7v1h-7zM36 167h5v1h-5zM715 167h5v1h-5zM376 176h5v1h-5zM36 176h3v1h-3zM717 176h3v1h-3zM376 185h5v1h-5zM36 185h3v1h-3zM717 185h3v1h-3zM376 194h5v1h-5zM36 194h3v1h-3zM717 194h3v1h-3zM376 203h5v1h-5zM36 203h3v1h-3zM717 203h3v1h-3zM375 212h7v1h-7zM36 212h5v1h-5zM715 212h5v1h-5zM376 222h5v1h-5zM36 222h3v1h-3zM717 222h3v1h-3zM376 231h5v1h-5zM36 231h3v1h-3zM717 231h3v1h-3zM376 240h5v1h-5zM36 240h3v1h-3zM717 240h3v1h-3zM376 249h5v1h-5zM36 249h3v1h-3zM717 249h3v1h-3zM375 258h7v1h-7zM36 258h5v1h-5zM715 258h5v1h-5zM376 267h5v1h-5zM36 267h3v1h-3zM717 267h3v1h-3zM376 276h5v1h-5zM36 276h3v1h-3zM717 276h3v1h-3zM376 285h5v1h-5zM36 285h3v1h-3zM717 285h3v1h-3zM376 294h5v1h-5zM36 294h3v1h-3zM717 294h3v1h-3zM375 303h7v1h-7zM36 303h5v1h-5zM715 303h5v1h-5zM376 313h5v1h-5zM36 313h3v1h-3zM717 313h3v1h-3zM376 322h5v1h-5zM36 322h3v1h-3zM717 322h3v1h-3zM376 331h5v1h-5zM36 331h3v1h-3zM717 331h3v1h-3zM376 340h5v1h-5zM36 340h3v1h-3zM717 340h3v1h-3zM375 349h7v1h-7zM36 349h5v1h-5zM715 349h5v1h-5zM376 358h5v1h-5zM36 358h3v1h-3zM717 358h3v1h-3zM376 367h5v1h-5zM36 367h3v1h-3zM717 367h3v1h-3zM376 376h5v1h-5zM36 376h3v1h-3zM717 376h3v1h-3zM376 385h5v1h-5zM36 385h3v1h-3zM717 385h3v1h-3zM375 394h7v1h-7zM36 394h5v1h-5zM715 394h5v1h-5zM376 404h5v1h-5zM36 404h3v1h-3zM717 404h3v1h-3zM376 413h5v1h-5zM36 413h3v1h-3zM717 413h3v1h-3zM376 422h5v1h-5zM36 422h3v1h-3zM717 422h3v1h-3zM376 431h5v1h-5zM36 431h3v1h-3zM717 431h3v1h-3zM375 440h7v1h-7zM36 440h5v1h-5zM715 440h5v1h-5zM376 449h5v1h-5zM36 449h3v1h-3zM717 449h3v1h-3zM376 458h5v1h-5zM36 458h3v1h-3zM717 458h3v1h-3zM376 467h5v1h-5zM36 467h3v1h-3zM717 467h3v1h-3zM376 476h5v1h-5zM36 476h3v1h-3zM717 476h3v1h-3zM375 485h7v1h-7zM36 485h5v1h-5zM715 485h5v1h-5zM376 495h5v1h-5zM36 495h3v1h-3zM717 495h3v1h-3zM376 504h5v1h-5zM36 504h3v1h-3zM717 504h3v1h-3zM376 513h5v1h-5zM36 513h3v1h-3zM717 513h3v1h-3zM376 522h5v1h-5zM36 522h3v1h-3zM717 522h3v1h-3z" fill="#c8cce2"/></svg><svg width="1004" height="709" style="position:absolute;left:0;top:0"><clipPath id="pc"><rect x="36" y="77" width="684" height="454"/></clipPath><g clip-path="url(#pc)"><path d="M35.0,108.00 L35.5,108.00 L36.0,108.00 L36.5,108.00 L37.0,108.00 L37.5,108.00 L38.0,108.00 L38.5,108.00 L39.0,108.00 L39.5,108.00 L40.0,108.00 L40.5,108.00 L41.0,108.08 L41.5,108.29 L42.0,108.53 L42.5,108.80 L43.0,109.09 L43.5,109.40 L44.0,109.74 L44.5,110.11 L45.0,110.50 L45.5,110.91 L46.0,111.34 L46.5,111.80 L47.0,112.28 L47.5,112.78 L48.0,113.31 L48.5,113.85 L49.0,114.41 L49.5,114.99 L50.0,115.59 L50.5,116.20 L51.0,116.84 L51.5,117.49 L52.0,118.15 L52.5,118.83 L53.0,119.52 L53.5,120.22 L54.0,120.94 L54.5,121.66 L55.0,122.40 L55.5,123.15 L56.0,123.90 L56.5,124.66 L57.0,125.43 L57.5,126.20 L58.0,126.98 L58.5,127.76 L59.0,128.54 L59.5,129.33 L60.0,130.11 L60.5,130.90 L61.0,131.68 L61.5,132.46 L62.0,133.24 L62.5,134.02 L63.0,134.79 L63.5,135.55 L64.0,136.31 L64.5,137.06 L65.0,137.80 L65.5,138.53 L66.0,139.25 L66.5,139.96 L67.0,140.66 L67.5,141.34 L68.0,142.01 L68.5,142.67 L69.0,143.31 L69.5,143.93 L70.0,144.54 L70.5,145.13 L71.0,145.70 L71.5,146.25 L72.0,146.78 L72.5,147.29 L73.0,147.78 L73.5,148.25 L74.0,148.69 L74.5,149.12 L75.0,149.52 L75.5,149.89 L76.0,150.24 L76.5,150.57 L77.0,150.87 L77.5,151.15 L78.0,151.40 L78.5,151.63 L79.0,151.80 L79.5,151.80 L80.0,151.80 L80.5,151.80 L81.0,151.80 L81.5,151.80 L82.0,151.80 L82.5,151.80 L83.0,151.80 L83.5,151.80 L84.0,151.80 L84.5,151.80 L85.0,151.80 L85.5,151.80 L86.0,151.76 L86.5,151.55 L87.0,151.31 L87.5,151.05 L88.0,150.77 L88.5,150.46 L89.0,150.12 L89.5,149.76 L90.0,149.38 L90.5,148.97 L91.0,148.54 L91.5,148.08 L92.0,147.61 L92.5,147.11 L93.0,146.59 L93.5,146.05 L94.0,145.49 L94.5,144.92 L95.0,144.32 L95.5,143.71 L96.0,143.08 L96.5,142.43 L97.0,141.77 L97.5,141.10 L98.0,140.41 L98.5,139.71 L99.0,138.99 L99.5,138.27 L100.0,137.53 L100.5,136.79 L101.0,136.04 L101.5,135.28 L102.0,134.51 L102.5,133.74 L103.0,132.96 L103.5,132.18 L104.0,131.40 L104.5,130.61 L105.0,129.83 L105.5,129.04 L106.0,128.26 L106.5,127.48 L107.0,126.70 L107.5,125.92 L108.0,125.15 L108.5,124.39 L109.0,123.63 L109.5,122.88 L110.0,122.13 L110.5,121.40 L111.0,120.68 L111.5,119.97 L112.0,119.27 L112.5,118.58 L113.0,117.91 L113.5,117.25 L114.0,116.61 L114.5,115.98 L115.0,115.37 L115.5,114.78 L116.0,114.20 L116.5,113.65 L117.0,113.11 L117.5,112.60 L118.0,112.11 L118.5,111.63 L119.0,111.18 L119.5,110.76 L120.0,110.35 L120.5,109.97 L121.0,109.62 L121.5,109.29 L122.0,108.98 L122.5,108.70 L123.0,108.44 L123.5,108.21 L124.0,108.01 L124.5,108.00 L125.0,108.00 L125.5,108.00 L126.0,108.00 L126.5,108.00 L127.0,108.00 L127.5,108.00 L128.0,108.00 L128.5,108.00 L129.0,108.00 L129.5,108.00 L130.0,108.00 L130.5,108.00 L131.0,108.01 L131.5,108.21 L132.0,108.44 L132.5,108.70 L133.0,108.98 L133.5,109.29 L134.0,109.62 L134.5,109.97 L135.0,110.35 L135.5,110.76 L136.0,111.18 L136.5,111.63 L137.0,112.11 L137.5,112.60 L138.0,113.11 L138.5,113.65 L139.0,114.20 L139.5,114.78 L140.0,115.37 L140.5,115.98 L141.0,116.61 L141.5,117.25 L142.0,117.91 L142.5,118.58 L143.0,119.27 L143.5,119.97 L144.0,120.68 L144.5,121.40 L145.0,122.13 L145.5,122.88 L146.0,123.63 L146.5,124.39 L147.0,125.15 L147.5,125.92 L148.0,126.70 L148.5,127.48 L149.0,128.26 L149.5,129.04 L150.0,129.83 L150.5,130.61 L151.0,131.40 L151.5,132.18 L152.0,132.96 L152.5,133.74 L153.0,134.51 L153.5,135.28 L154.0,136.04 L154.5,136.79 L155.0,137.53 L155.5,138.27 L156.0,138.99 L156.5,139.71 L157.0,140.41 L157.5,141.10 L158.0,141.77 L158.5,142.43 L159.0,143.08 L159.5,143.71 L160.0,144.32 L160.5,144.92 L161.0,145.49 L161.5,146.05 L162.0,146.59 L162.5,147.11 L163.0,147.61 L163.5,148.08 L164.0,148.54 L164.5,148.97 L165.0,149.38 L165.5,149.76 L166.0,150.12 L166.5,150.46 L167.0,150.77 L167.5,151.05 L168.0,151.31 L168.5,151.55 L169.0,151.76 L169.5,151.80 L170.0,151.80 L170.5,151.80 L171.0,151.80 L171.5,151.80 L172.0,151.80 L172.5,151.80 L173.0,151.80 L173.5,151.80 L174.0,151.80 L174.5,151.80 L175.0,151.80 L175.5,151.80 L176.0,151.80 L176.5,151.63 L177.0,151.40 L177.5,151.15 L178.0,150.87 L178.5,150.57 L179.0,150.24 L179.5,149.89 L180.0,149.52 L180.5,149.12 L181.0,148.69 L181.5,148.25 L182.0,147.78 L182.5,147.29 L183.0,146.78 L183.5,146.25 L184.0,145.70 L184.5,145.13 L185.0,144.54 L185.5,143.93 L186.0,143.31 L186.5,142.67 L187.0,142.01 L187.5,141.34 L188.0,140.66 L188.5,139.96 L189.0,139.25 L189.5,138.53 L190.0,137.80 L190.5,137.06 L191.0,136.31 L191.5,135.55 L192.0,134.79 L192.5,134.02 L193.0,133.24 L193.5,132.46 L194.0,131.68 L194.5,130.90 L195.0,130.11 L195.5,129.33 L196.0,128.54 L196.5,127.76 L197.0,126.98 L197.5,126.20 L198.0,125.43 L198.5,124.66 L199.0,123.90 L199.5,123.15 L200.0,122.40 L200.5,121.66 L201.0,120.94 L201.5,120.22 L202.0,119.52 L202.5,118.83 L203.0,118.15 L203.5,117.49 L204.0,116.84 L204.5,116.20 L205.0,115.59 L205.5,114.99 L206.0,114.41 L206.5,113.85 L207.0,113.31 L207.5,112.78 L208.0,112.28 L208.5,111.80 L209.0,111.34 L209.5,110.91 L210.0,110.50 L210.5,110.11 L211.0,109.74 L211.5,109.40 L212.0,109.09 L212.5,108.80 L213.0,108.53 L213.5,108.29 L214.0,108.08 L214.5,108.00 L215.0,108.00 L215.5,108.00 L216.0,108.00 L216.5,108.00 L217.0,108.00 L217.5,108.00 L218.0,108.00 L218.5,108.00 L219.0,108.00 L219.5,108.00 L220.0,108.00 L220.5,108.00 L221.0,108.00 L221.5,108.14 L222.0,108.36 L222.5,108.60 L223.0,108.87 L223.5,109.17 L224.0,109.49 L224.5,109.84 L225.0,110.21 L225.5,110.61 L226.0,111.03 L226.5,111.47 L227.0,111.93 L227.5,112.42 L228.0,112.93 L228.5,113.45 L229.0,114.00 L229.5,114.57 L230.0,115.16 L230.5,115.76 L231.0,116.38 L231.5,117.02 L232.0,117.67 L232.5,118.34 L233.0,119.02 L233.5,119.71 L234.0,120.42 L234.5,121.14 L235.0,121.87 L235.5,122.61 L236.0,123.36 L236.5,124.11 L237.0,124.87 L237.5,125.64 L238.0,126.42 L238.5,127.20 L239.0,127.98 L239.5,128.76 L240.0,129.55 L240.5,130.33 L241.0,131.12 L241.5,131.90 L242.0,132.68 L242.5,133.46 L243.0,134.23 L243.5,135.00 L244.0,135.76 L244.5,136.52 L245.0,137.27 L245.5,138.00 L246.0,138.73 L246.5,139.45 L247.0,140.16 L247.5,140.85 L248.0,141.53 L248.5,142.20 L249.0,142.85 L249.5,143.48 L250.0,144.10 L250.5,144.70 L251.0,145.29 L251.5,145.85 L252.0,146.40 L252.5,146.92 L253.0,147.43 L253.5,147.91 L254.0,148.38 L254.5,148.81 L255.0,149.23 L255.5,149.62 L256.0,149.99 L256.5,150.34 L257.0,150.66 L257.5,150.95 L258.0,151.22 L258.5,151.47 L259.0,151.68 L259.5,151.80 L260.0,151.80 L260.5,151.80 L261.0,151.80 L261.5,151.80 L262.0,151.80 L262.5,151.80 L263.0,151.80 L263.5,151.80 L264.0,151.80 L264.5,151.80 L265.0,151.80 L265.5,151.80 L266.0,151.80 L266.5,151.70 L267.0,151.48 L267.5,151.24 L268.0,150.98 L268.5,150.68 L269.0,150.37 L269.5,150.02 L270.0,149.66 L270.5,149.26 L271.0,148.85 L271.5,148.41 L272.0,147.95 L272.5,147.47 L273.0,146.97 L273.5,146.44 L274.0,145.90 L274.5,145.33 L275.0,144.75 L275.5,144.15 L276.0,143.53 L276.5,142.90 L277.0,142.25 L277.5,141.58 L278.0,140.91 L278.5,140.21 L279.0,139.51 L279.5,138.79 L280.0,138.06 L280.5,137.33 L281.0,136.58 L281.5,135.83 L282.0,135.06 L282.5,134.30 L283.0,133.52 L283.5,132.74 L284.0,131.96 L284.5,131.18 L285.0,130.40 L285.5,129.61 L286.0,128.82 L286.5,128.04 L287.0,127.26 L287.5,126.48 L288.0,125.70 L288.5,124.94 L289.0,124.17 L289.5,123.42 L290.0,122.67 L290.5,121.93 L291.0,121.20 L291.5,120.48 L292.0,119.77 L292.5,119.07 L293.0,118.39 L293.5,117.72 L294.0,117.07 L294.5,116.43 L295.0,115.81 L295.5,115.20 L296.0,114.62 L296.5,114.05 L297.0,113.50 L297.5,112.97 L298.0,112.46 L298.5,111.97 L299.0,111.51 L299.5,111.06 L300.0,110.64 L300.5,110.24 L301.0,109.87 L301.5,109.52 L302.0,109.20 L302.5,108.90 L303.0,108.62 L303.5,108.38 L304.0,108.15 L304.5,108.00 L305.0,108.00 L305.5,108.00 L306.0,108.00 L306.5,108.00 L307.0,108.00 L307.5,108.00 L308.0,108.00 L308.5,108.00 L309.0,108.00 L309.5,108.00 L310.0,108.00 L310.5,108.00 L311.0,108.00 L311.5,108.06 L312.0,108.27 L312.5,108.51 L313.0,108.77 L313.5,109.06 L314.0,109.38 L314.5,109.71 L315.0,110.08 L315.5,110.46 L316.0,110.87 L316.5,111.31 L317.0,111.76 L317.5,112.24 L318.0,112.74 L318.5,113.26 L319.0,113.80 L319.5,114.36 L320.0,114.94 L320.5,115.54 L321.0,116.15 L321.5,116.79 L322.0,117.43 L322.5,118.09 L323.0,118.77 L323.5,119.46 L324.0,120.16 L324.5,120.88 L325.0,121.60 L325.5,122.34 L326.0,123.09 L326.5,123.84 L327.0,124.60 L327.5,125.37 L328.0,126.14 L328.5,126.91 L329.0,127.70 L329.5,128.48 L330.0,129.26 L330.5,130.05 L331.0,130.83 L331.5,131.62 L332.0,132.40 L332.5,133.18 L333.0,133.96 L333.5,134.73 L334.0,135.49 L334.5,136.25 L335.0,137.00 L335.5,137.74 L336.0,138.47 L336.5,139.19 L337.0,139.90 L337.5,140.60 L338.0,141.29 L338.5,141.96 L339.0,142.62 L339.5,143.26 L340.0,143.88 L340.5,144.49 L341.0,145.08 L341.5,145.65 L342.0,146.20 L342.5,146.74 L343.0,147.25 L343.5,147.74 L344.0,148.21 L344.5,148.66 L345.0,149.08 L345.5,149.49 L346.0,149.86 L346.5,150.22 L347.0,150.55 L347.5,150.85 L348.0,151.13 L348.5,151.38 L349.0,151.61 L349.5,151.80 L350.0,151.80 L350.5,151.80 L351.0,151.80 L351.5,151.80 L352.0,151.80 L352.5,151.80 L353.0,151.80 L353.5,151.80 L354.0,151.80 L354.5,151.80 L355.0,151.80 L355.5,151.80 L356.0,151.80 L356.5,151.77 L357.0,151.56 L357.5,151.33 L358.0,151.08 L358.5,150.79 L359.0,150.48 L359.5,150.15 L360.0,149.79 L360.5,149.41 L361.0,149.00 L361.5,148.57 L362.0,148.12 L362.5,147.65 L363.0,147.15 L363.5,146.63 L364.0,146.10 L364.5,145.54 L365.0,144.96 L365.5,144.37 L366.0,143.76 L366.5,143.13 L367.0,142.49 L367.5,141.83 L368.0,141.15 L368.5,140.46 L369.0,139.76 L369.5,139.05 L370.0,138.33 L370.5,137.59 L371.0,136.85 L371.5,136.10 L372.0,135.34 L372.5,134.57 L373.0,133.80 L373.5,133.03 L374.0,132.25 L374.5,131.46 L375.0,130.68 L375.5,129.89 L376.0,129.11 L376.5,128.32 L377.0,127.54 L377.5,126.76 L378.0,125.98 L378.5,125.21 L379.0,124.45 L379.5,123.69 L380.0,122.94 L380.5,122.19 L381.0,121.46 L381.5,120.74 L382.0,120.02 L382.5,119.32 L383.0,118.64 L383.5,117.96 L384.0,117.30 L384.5,116.66 L385.0,116.03 L385.5,115.42 L386.0,114.83 L386.5,114.25 L387.0,113.69 L387.5,113.16 L388.0,112.64 L388.5,112.15 L389.0,111.67 L389.5,111.22 L390.0,110.79 L390.5,110.38 L391.0,110.00 L391.5,109.64 L392.0,109.31 L392.5,109.00 L393.0,108.72 L393.5,108.46 L394.0,108.23 L394.5,108.03 L395.0,108.00 L395.5,108.00 L396.0,108.00 L396.5,108.00 L397.0,108.00 L397.5,108.00 L398.0,108.00 L398.5,108.00 L399.0,108.00 L399.5,108.00 L400.0,108.00 L400.5,108.00 L401.0,108.00 L401.5,108.00 L402.0,108.20 L402.5,108.42 L403.0,108.68 L403.5,108.96 L404.0,109.26 L404.5,109.59 L405.0,109.94 L405.5,110.32 L406.0,110.72 L406.5,111.15 L407.0,111.60 L407.5,112.07 L408.0,112.56 L408.5,113.07 L409.0,113.61 L409.5,114.16 L410.0,114.73 L410.5,115.32 L411.0,115.93 L411.5,116.56 L412.0,117.20 L412.5,117.85 L413.0,118.53 L413.5,119.21 L414.0,119.91 L414.5,120.62 L415.0,121.34 L415.5,122.07 L416.0,122.82 L416.5,123.57 L417.0,124.32 L417.5,125.09 L418.0,125.86 L418.5,126.63 L419.0,127.41 L419.5,128.20 L420.0,128.98 L420.5,129.77 L421.0,130.55 L421.5,131.34 L422.0,132.12 L422.5,132.90 L423.0,133.68 L423.5,134.45 L424.0,135.22 L424.5,135.98 L425.0,136.73 L425.5,137.47 L426.0,138.21 L426.5,138.94 L427.0,139.65 L427.5,140.35 L428.0,141.04 L428.5,141.72 L429.0,142.38 L429.5,143.03 L430.0,143.66 L430.5,144.27 L431.0,144.87 L431.5,145.45 L432.0,146.01 L432.5,146.55 L433.0,147.07 L433.5,147.57 L434.0,148.04 L434.5,148.50 L435.0,148.93 L435.5,149.34 L436.0,149.73 L436.5,150.09 L437.0,150.43 L437.5,150.74 L438.0,151.03 L438.5,151.29 L439.0,151.53 L439.5,151.74 L440.0,151.80 L440.5,151.80 L441.0,151.80 L441.5,151.80 L442.0,151.80 L442.5,151.80 L443.0,151.80 L443.5,151.80 L444.0,151.80 L444.5,151.80 L445.0,151.80 L445.5,151.80 L446.0,151.80 L446.5,151.80 L447.0,151.64 L447.5,151.42 L448.0,151.17 L448.5,150.90 L449.0,150.60 L449.5,150.27 L450.0,149.92 L450.5,149.55 L451.0,149.15 L451.5,148.73 L452.0,148.28 L452.5,147.82 L453.0,147.33 L453.5,146.82 L454.0,146.29 L454.5,145.74 L455.0,145.17 L455.5,144.59 L456.0,143.98 L456.5,143.36 L457.0,142.72 L457.5,142.06 L458.0,141.40 L458.5,140.71 L459.0,140.02 L459.5,139.31 L460.0,138.59 L460.5,137.86 L461.0,137.12 L461.5,136.37 L462.0,135.61 L462.5,134.85 L463.0,134.08 L463.5,133.31 L464.0,132.53 L464.5,131.74 L465.0,130.96 L465.5,130.18 L466.0,129.39 L466.5,128.60 L467.0,127.82 L467.5,127.04 L468.0,126.26 L468.5,125.49 L469.0,124.72 L469.5,123.96 L470.0,123.21 L470.5,122.46 L471.0,121.72 L471.5,120.99 L472.0,120.28 L472.5,119.57 L473.0,118.88 L473.5,118.20 L474.0,117.54 L474.5,116.89 L475.0,116.25 L475.5,115.64 L476.0,115.04 L476.5,114.45 L477.0,113.89 L477.5,113.35 L478.0,112.82 L478.5,112.32 L479.0,111.84 L479.5,111.38 L480.0,110.94 L480.5,110.53 L481.0,110.14 L481.5,109.77 L482.0,109.43 L482.5,109.11 L483.0,108.82 L483.5,108.55 L484.0,108.31 L484.5,108.10 L485.0,108.00 L485.5,108.00 L486.0,108.00 L486.5,108.00 L487.0,108.00 L487.5,108.00 L488.0,108.00 L488.5,108.00 L489.0,108.00 L489.5,108.00 L490.0,108.00 L490.5,108.00 L491.0,108.00 L491.5,108.00 L492.0,108.12 L492.5,108.34 L493.0,108.58 L493.5,108.85 L494.0,109.15 L494.5,109.47 L495.0,109.81 L495.5,110.18 L496.0,110.58 L496.5,110.99 L497.0,111.43 L497.5,111.90 L498.0,112.38 L498.5,112.89 L499.0,113.41 L499.5,113.96 L500.0,114.52 L500.5,115.11 L501.0,115.71 L501.5,116.33 L502.0,116.97 L502.5,117.62 L503.0,118.28 L503.5,118.96 L504.0,119.66 L504.5,120.36 L505.0,121.08 L505.5,121.81 L506.0,122.55 L506.5,123.30 L507.0,124.05 L507.5,124.81 L508.0,125.58 L508.5,126.36 L509.0,127.13 L509.5,127.91 L510.0,128.70 L510.5,129.48 L511.0,130.27 L511.5,131.05 L512.0,131.84 L512.5,132.62 L513.0,133.40 L513.5,134.17 L514.0,134.94 L514.5,135.70 L515.0,136.46 L515.5,137.21 L516.0,137.95 L516.5,138.68 L517.0,139.39 L517.5,140.10 L518.0,140.80 L518.5,141.48 L519.0,142.14 L519.5,142.80 L520.0,143.43 L520.5,144.05 L521.0,144.66 L521.5,145.24 L522.0,145.81 L522.5,146.36 L523.0,146.88 L523.5,147.39 L524.0,147.88 L524.5,148.34 L525.0,148.78 L525.5,149.20 L526.0,149.59 L526.5,149.97 L527.0,150.31 L527.5,150.63 L528.0,150.93 L528.5,151.20 L529.0,151.45 L529.5,151.67 L530.0,151.80 L530.5,151.80 L531.0,151.80 L531.5,151.80 L532.0,151.80 L532.5,151.80 L533.0,151.80 L533.5,151.80 L534.0,151.80 L534.5,151.80 L535.0,151.80 L535.5,151.80 L536.0,151.80 L536.5,151.80 L537.0,151.72 L537.5,151.50 L538.0,151.26 L538.5,151.00 L539.0,150.71 L539.5,150.39 L540.0,150.05 L540.5,149.69 L541.0,149.30 L541.5,148.88 L542.0,148.45 L542.5,147.99 L543.0,147.51 L543.5,147.01 L544.0,146.48 L544.5,145.94 L545.0,145.38 L545.5,144.80 L546.0,144.20 L546.5,143.58 L547.0,142.95 L547.5,142.30 L548.0,141.64 L548.5,140.96 L549.0,140.27 L549.5,139.56 L550.0,138.85 L550.5,138.12 L551.0,137.39 L551.5,136.64 L552.0,135.89 L552.5,135.12 L553.0,134.36 L553.5,133.58 L554.0,132.81 L554.5,132.03 L555.0,131.24 L555.5,130.46 L556.0,129.67 L556.5,128.89 L557.0,128.10 L557.5,127.32 L558.0,126.54 L558.5,125.77 L559.0,125.00 L559.5,124.23 L560.0,123.48 L560.5,122.73 L561.0,121.99 L561.5,121.26 L562.0,120.53 L562.5,119.83 L563.0,119.13 L563.5,118.45 L564.0,117.78 L564.5,117.12 L565.0,116.48 L565.5,115.86 L566.0,115.25 L566.5,114.66 L567.0,114.09 L567.5,113.54 L568.0,113.01 L568.5,112.50 L569.0,112.01 L569.5,111.54 L570.0,111.10 L570.5,110.67 L571.0,110.28 L571.5,109.90 L572.0,109.55 L572.5,109.22 L573.0,108.92 L573.5,108.64 L574.0,108.39 L574.5,108.17 L575.0,108.00 L575.5,108.00 L576.0,108.00 L576.5,108.00 L577.0,108.00 L577.5,108.00 L578.0,108.00 L578.5,108.00 L579.0,108.00 L579.5,108.00 L580.0,108.00 L580.5,108.00 L581.0,108.00 L581.5,108.00 L582.0,108.05 L582.5,108.26 L583.0,108.49 L583.5,108.75 L584.0,109.04 L584.5,109.35 L585.0,109.69 L585.5,110.05 L586.0,110.43 L586.5,110.84 L587.0,111.27 L587.5,111.73 L588.0,112.20 L588.5,112.70 L589.0,113.22 L589.5,113.76 L590.0,114.32 L590.5,114.90 L591.0,115.49 L591.5,116.10 L592.0,116.73 L592.5,117.38 L593.0,118.04 L593.5,118.72 L594.0,119.41 L594.5,120.11 L595.0,120.82 L595.5,121.55 L596.0,122.28 L596.5,123.03 L597.0,123.78 L597.5,124.54 L598.0,125.30 L598.5,126.08 L599.0,126.85 L599.5,127.63 L600.0,128.42 L600.5,129.20 L601.0,129.99 L601.5,130.77 L602.0,131.56 L602.5,132.34 L603.0,133.12 L603.5,133.89 L604.0,134.67 L604.5,135.43 L605.0,136.19 L605.5,136.94 L606.0,137.68 L606.5,138.41 L607.0,139.14 L607.5,139.85 L608.0,140.55 L608.5,141.23 L609.0,141.91 L609.5,142.56 L610.0,143.21 L610.5,143.83 L611.0,144.44 L611.5,145.03 L612.0,145.61 L612.5,146.16 L613.0,146.70 L613.5,147.21 L614.0,147.70 L614.5,148.17 L615.0,148.62 L615.5,149.05 L616.0,149.45 L616.5,149.83 L617.0,150.19 L617.5,150.52 L618.0,150.83 L618.5,151.11 L619.0,151.36 L619.5,151.59 L620.0,151.79 L620.5,151.80 L621.0,151.80 L621.5,151.80 L622.0,151.80 L622.5,151.80 L623.0,151.80 L623.5,151.80 L624.0,151.80 L624.5,151.80 L625.0,151.80 L625.5,151.80 L626.0,151.80 L626.5,151.80 L627.0,151.79 L627.5,151.58 L628.0,151.35 L628.5,151.10 L629.0,150.82 L629.5,150.51 L630.0,150.18 L630.5,149.82 L631.0,149.44 L631.5,149.03 L632.0,148.61 L632.5,148.16 L633.0,147.68 L633.5,147.19 L634.0,146.67 L634.5,146.14 L635.0,145.58 L635.5,145.01 L636.0,144.42 L636.5,143.81 L637.0,143.18 L637.5,142.54 L638.0,141.88 L638.5,141.21 L639.0,140.52 L639.5,139.82 L640.0,139.11 L640.5,138.38 L641.0,137.65 L641.5,136.91 L642.0,136.16 L642.5,135.40 L643.0,134.63 L643.5,133.86 L644.0,133.09 L644.5,132.31 L645.0,131.53 L645.5,130.74 L646.0,129.96 L646.5,129.17 L647.0,128.38 L647.5,127.60 L648.0,126.82 L648.5,126.04 L649.0,125.27 L649.5,124.51 L650.0,123.75 L650.5,123.00 L651.0,122.25 L651.5,121.52 L652.0,120.79 L652.5,120.08 L653.0,119.38 L653.5,118.69 L654.0,118.01 L654.5,117.35 L655.0,116.71 L655.5,116.08 L656.0,115.47 L656.5,114.87 L657.0,114.30 L657.5,113.74 L658.0,113.20 L658.5,112.68 L659.0,112.18 L659.5,111.71 L660.0,111.25 L660.5,110.82 L661.0,110.42 L661.5,110.03 L662.0,109.67 L662.5,109.34 L663.0,109.03 L663.5,108.74 L664.0,108.48 L664.5,108.25 L665.0,108.04 L665.5,108.00 L666.0,108.00 L666.5,108.00 L667.0,108.00 L667.5,108.00 L668.0,108.00 L668.5,108.00 L669.0,108.00 L669.5,108.00 L670.0,108.00 L670.5,108.00 L671.0,108.00 L671.5,108.00 L672.0,108.00 L672.5,108.18 L673.0,108.40 L673.5,108.66 L674.0,108.93 L674.5,109.23 L675.0,109.56 L675.5,109.91 L676.0,110.29 L676.5,110.69 L677.0,111.11 L677.5,111.56 L678.0,112.03 L678.5,112.52 L679.0,113.03 L679.5,113.56 L680.0,114.11 L680.5,114.69 L681.0,115.27 L681.5,115.88 L682.0,116.51 L682.5,117.15 L683.0,117.80 L683.5,118.47 L684.0,119.16 L684.5,119.85 L685.0,120.56 L685.5,121.28 L686.0,122.02 L686.5,122.76 L687.0,123.51 L687.5,124.26 L688.0,125.03 L688.5,125.80 L689.0,126.57 L689.5,127.35 L690.0,128.13 L690.5,128.92 L691.0,129.70 L691.5,130.49 L692.0,131.27 L692.5,132.06 L693.0,132.84 L693.5,133.62 L694.0,134.39 L694.5,135.16 L695.0,135.92 L695.5,136.67 L696.0,137.42 L696.5,138.15 L697.0,138.88 L697.5,139.59 L698.0,140.30 L698.5,140.99 L699.0,141.66 L699.5,142.33 L700.0,142.98 L700.5,143.61 L701.0,144.22 L701.5,144.82 L702.0,145.40 L702.5,145.96 L703.0,146.51 L703.5,147.03 L704.0,147.53 L704.5,148.01 L705.0,148.47 L705.5,148.90 L706.0,149.31 L706.5,149.70 L707.0,150.06 L707.5,150.40 L708.0,150.72 L708.5,151.01 L709.0,151.27 L709.5,151.51 L710.0,151.72 L710.5,151.80 L711.0,151.80 L711.5,151.80 L712.0,151.80 L712.5,151.80 L713.0,151.80 L713.5,151.80 L714.0,151.80 L714.5,151.80 L715.0,151.80 L715.5,151.80 L716.0,151.80 L716.5,151.80 L717.0,151.80 L717.5,151.66 L718.0,151.44 L718.5,151.19 L719.0,150.92 L719.5,150.62 L720.0,150.30 L720.5,149.95 L721.0,149.58" fill="none" stroke="#f0ee28" stroke-width="1.5"/><path d="M35.0,221.00 L35.5,221.00 L36.0,221.00 L36.5,221.00 L37.0,221.00 L37.5,221.00 L38.0,221.00 L38.5,221.00 L39.0,221.00 L39.5,221.00 L40.0,221.00 L40.5,221.00 L41.0,221.08 L41.5,221.29 L42.0,221.52 L42.5,221.79 L43.0,222.07 L43.5,222.38 L44.0,222.72 L44.5,223.08 L45.0,223.46 L45.5,223.87 L46.0,224.30 L46.5,224.75 L47.0,225.22 L47.5,225.72 L48.0,226.23 L48.5,226.77 L49.0,227.32 L49.5,227.89 L50.0,228.48 L50.5,229.09 L51.0,229.72 L51.5,230.36 L52.0,231.01 L52.5,231.68 L53.0,232.36 L53.5,233.05 L54.0,233.76 L54.5,234.48 L55.0,235.20 L55.5,235.94 L56.0,236.68 L56.5,237.43 L57.0,238.19 L57.5,238.95 L58.0,239.72 L58.5,240.49 L59.0,241.26 L59.5,242.03 L60.0,242.81 L60.5,243.58 L61.0,244.36 L61.5,245.13 L62.0,245.90 L62.5,246.66 L63.0,247.42 L63.5,248.17 L64.0,248.92 L64.5,249.66 L65.0,250.39 L65.5,251.11 L66.0,251.82 L66.5,252.52 L67.0,253.21 L67.5,253.88 L68.0,254.55 L68.5,255.19 L69.0,255.82 L69.5,256.44 L70.0,257.04 L70.5,257.62 L71.0,258.18 L71.5,258.72 L72.0,259.25 L72.5,259.75 L73.0,260.24 L73.5,260.70 L74.0,261.14 L74.5,261.55 L75.0,261.95 L75.5,262.32 L76.0,262.67 L76.5,262.99 L77.0,263.29 L77.5,263.56 L78.0,263.81 L78.5,264.03 L79.0,264.20 L79.5,264.20 L80.0,264.20 L80.5,264.20 L81.0,264.20 L81.5,264.20 L82.0,264.20 L82.5,264.20 L83.0,264.20 L83.5,264.20 L84.0,264.20 L84.5,264.20 L85.0,264.20 L85.5,264.20 L86.0,264.16 L86.5,263.95 L87.0,263.72 L87.5,263.46 L88.0,263.18 L88.5,262.88 L89.0,262.54 L89.5,262.19 L90.0,261.81 L90.5,261.41 L91.0,260.98 L91.5,260.53 L92.0,260.06 L92.5,259.57 L93.0,259.06 L93.5,258.53 L94.0,257.98 L94.5,257.41 L95.0,256.82 L95.5,256.22 L96.0,255.60 L96.5,254.96 L97.0,254.31 L97.5,253.64 L98.0,252.96 L98.5,252.27 L99.0,251.57 L99.5,250.85 L100.0,250.13 L100.5,249.40 L101.0,248.65 L101.5,247.90 L102.0,247.15 L102.5,246.39 L103.0,245.62 L103.5,244.85 L104.0,244.08 L104.5,243.31 L105.0,242.53 L105.5,241.76 L106.0,240.98 L106.5,240.21 L107.0,239.44 L107.5,238.68 L108.0,237.92 L108.5,237.16 L109.0,236.41 L109.5,235.67 L110.0,234.94 L110.5,234.22 L111.0,233.50 L111.5,232.80 L112.0,232.11 L112.5,231.44 L113.0,230.77 L113.5,230.12 L114.0,229.49 L114.5,228.87 L115.0,228.27 L115.5,227.69 L116.0,227.12 L116.5,226.57 L117.0,226.04 L117.5,225.54 L118.0,225.05 L118.5,224.58 L119.0,224.14 L119.5,223.72 L120.0,223.32 L120.5,222.95 L121.0,222.59 L121.5,222.27 L122.0,221.97 L122.5,221.69 L123.0,221.44 L123.5,221.21 L124.0,221.01 L124.5,221.00 L125.0,221.00 L125.5,221.00 L126.0,221.00 L126.5,221.00 L127.0,221.00 L127.5,221.00 L128.0,221.00 L128.5,221.00 L129.0,221.00 L129.5,221.00 L130.0,221.00 L130.5,221.00 L131.0,221.01 L131.5,221.21 L132.0,221.44 L132.5,221.69 L133.0,221.97 L133.5,222.27 L134.0,222.59 L134.5,222.95 L135.0,223.32 L135.5,223.72 L136.0,224.14 L136.5,224.58 L137.0,225.05 L137.5,225.54 L138.0,226.04 L138.5,226.57 L139.0,227.12 L139.5,227.69 L140.0,228.27 L140.5,228.87 L141.0,229.49 L141.5,230.12 L142.0,230.77 L142.5,231.44 L143.0,232.11 L143.5,232.80 L144.0,233.50 L144.5,234.22 L145.0,234.94 L145.5,235.67 L146.0,236.41 L146.5,237.16 L147.0,237.92 L147.5,238.68 L148.0,239.44 L148.5,240.21 L149.0,240.98 L149.5,241.76 L150.0,242.53 L150.5,243.31 L151.0,244.08 L151.5,244.85 L152.0,245.62 L152.5,246.39 L153.0,247.15 L153.5,247.90 L154.0,248.65 L154.5,249.40 L155.0,250.13 L155.5,250.85 L156.0,251.57 L156.5,252.27 L157.0,252.96 L157.5,253.64 L158.0,254.31 L158.5,254.96 L159.0,255.60 L159.5,256.22 L160.0,256.82 L160.5,257.41 L161.0,257.98 L161.5,258.53 L162.0,259.06 L162.5,259.57 L163.0,260.06 L163.5,260.53 L164.0,260.98 L164.5,261.41 L165.0,261.81 L165.5,262.19 L166.0,262.54 L166.5,262.88 L167.0,263.18 L167.5,263.46 L168.0,263.72 L168.5,263.95 L169.0,264.16 L169.5,264.20 L170.0,264.20 L170.5,264.20 L171.0,264.20 L171.5,264.20 L172.0,264.20 L172.5,264.20 L173.0,264.20 L173.5,264.20 L174.0,264.20 L174.5,264.20 L175.0,264.20 L175.5,264.20 L176.0,264.20 L176.5,264.03 L177.0,263.81 L177.5,263.56 L178.0,263.29 L178.5,262.99 L179.0,262.67 L179.5,262.32 L180.0,261.95 L180.5,261.55 L181.0,261.14 L181.5,260.70 L182.0,260.24 L182.5,259.75 L183.0,259.25 L183.5,258.72 L184.0,258.18 L184.5,257.62 L185.0,257.04 L185.5,256.44 L186.0,255.82 L186.5,255.19 L187.0,254.55 L187.5,253.88 L188.0,253.21 L188.5,252.52 L189.0,251.82 L189.5,251.11 L190.0,250.39 L190.5,249.66 L191.0,248.92 L191.5,248.17 L192.0,247.42 L192.5,246.66 L193.0,245.90 L193.5,245.13 L194.0,244.36 L194.5,243.58 L195.0,242.81 L195.5,242.03 L196.0,241.26 L196.5,240.49 L197.0,239.72 L197.5,238.95 L198.0,238.19 L198.5,237.43 L199.0,236.68 L199.5,235.94 L200.0,235.20 L200.5,234.48 L201.0,233.76 L201.5,233.05 L202.0,232.36 L202.5,231.68 L203.0,231.01 L203.5,230.36 L204.0,229.72 L204.5,229.09 L205.0,228.48 L205.5,227.89 L206.0,227.32 L206.5,226.77 L207.0,226.23 L207.5,225.72 L208.0,225.22 L208.5,224.75 L209.0,224.30 L209.5,223.87 L210.0,223.46 L210.5,223.08 L211.0,222.72 L211.5,222.38 L212.0,222.07 L212.5,221.79 L213.0,221.52 L213.5,221.29 L214.0,221.08 L214.5,221.00 L215.0,221.00 L215.5,221.00 L216.0,221.00 L216.5,221.00 L217.0,221.00 L217.5,221.00 L218.0,221.00 L218.5,221.00 L219.0,221.00 L219.5,221.00 L220.0,221.00 L220.5,221.00 L221.0,221.00 L221.5,221.14 L222.0,221.35 L222.5,221.59 L223.0,221.86 L223.5,222.16 L224.0,222.47 L224.5,222.82 L225.0,223.18 L225.5,223.57 L226.0,223.99 L226.5,224.42 L227.0,224.88 L227.5,225.36 L228.0,225.86 L228.5,226.38 L229.0,226.92 L229.5,227.48 L230.0,228.06 L230.5,228.65 L231.0,229.26 L231.5,229.89 L232.0,230.54 L232.5,231.20 L233.0,231.87 L233.5,232.55 L234.0,233.25 L234.5,233.96 L235.0,234.68 L235.5,235.41 L236.0,236.14 L236.5,236.89 L237.0,237.64 L237.5,238.40 L238.0,239.16 L238.5,239.93 L239.0,240.70 L239.5,241.48 L240.0,242.25 L240.5,243.03 L241.0,243.80 L241.5,244.57 L242.0,245.34 L242.5,246.11 L243.0,246.87 L243.5,247.63 L244.0,248.38 L244.5,249.13 L245.0,249.87 L245.5,250.59 L246.0,251.31 L246.5,252.02 L247.0,252.72 L247.5,253.40 L248.0,254.07 L248.5,254.73 L249.0,255.37 L249.5,256.00 L250.0,256.61 L250.5,257.20 L251.0,257.78 L251.5,258.33 L252.0,258.87 L252.5,259.39 L253.0,259.89 L253.5,260.37 L254.0,260.82 L254.5,261.26 L255.0,261.67 L255.5,262.05 L256.0,262.42 L256.5,262.76 L257.0,263.07 L257.5,263.37 L258.0,263.63 L258.5,263.87 L259.0,264.08 L259.5,264.20 L260.0,264.20 L260.5,264.20 L261.0,264.20 L261.5,264.20 L262.0,264.20 L262.5,264.20 L263.0,264.20 L263.5,264.20 L264.0,264.20 L264.5,264.20 L265.0,264.20 L265.5,264.20 L266.0,264.20 L266.5,264.10 L267.0,263.89 L267.5,263.65 L268.0,263.39 L268.5,263.10 L269.0,262.78 L269.5,262.45 L270.0,262.08 L270.5,261.70 L271.0,261.29 L271.5,260.86 L272.0,260.40 L272.5,259.93 L273.0,259.43 L273.5,258.91 L274.0,258.38 L274.5,257.82 L275.0,257.25 L275.5,256.66 L276.0,256.05 L276.5,255.42 L277.0,254.78 L277.5,254.12 L278.0,253.45 L278.5,252.77 L279.0,252.08 L279.5,251.37 L280.0,250.65 L280.5,249.92 L281.0,249.19 L281.5,248.44 L282.0,247.69 L282.5,246.94 L283.0,246.17 L283.5,245.41 L284.0,244.64 L284.5,243.86 L285.0,243.09 L285.5,242.31 L286.0,241.54 L286.5,240.77 L287.0,239.99 L287.5,239.23 L288.0,238.46 L288.5,237.70 L289.0,236.95 L289.5,236.20 L290.0,235.47 L290.5,234.74 L291.0,234.02 L291.5,233.31 L292.0,232.61 L292.5,231.92 L293.0,231.25 L293.5,230.59 L294.0,229.94 L294.5,229.31 L295.0,228.70 L295.5,228.10 L296.0,227.53 L296.5,226.96 L297.0,226.42 L297.5,225.90 L298.0,225.40 L298.5,224.92 L299.0,224.46 L299.5,224.02 L300.0,223.61 L300.5,223.21 L301.0,222.85 L301.5,222.50 L302.0,222.18 L302.5,221.89 L303.0,221.62 L303.5,221.37 L304.0,221.15 L304.5,221.00 L305.0,221.00 L305.5,221.00 L306.0,221.00 L306.5,221.00 L307.0,221.00 L307.5,221.00 L308.0,221.00 L308.5,221.00 L309.0,221.00 L309.5,221.00 L310.0,221.00 L310.5,221.00 L311.0,221.00 L311.5,221.06 L312.0,221.27 L312.5,221.50 L313.0,221.76 L313.5,222.05 L314.0,222.36 L314.5,222.69 L315.0,223.05 L315.5,223.43 L316.0,223.84 L316.5,224.26 L317.0,224.71 L317.5,225.18 L318.0,225.68 L318.5,226.19 L319.0,226.72 L319.5,227.28 L320.0,227.85 L320.5,228.44 L321.0,229.04 L321.5,229.67 L322.0,230.30 L322.5,230.96 L323.0,231.62 L323.5,232.30 L324.0,233.00 L324.5,233.70 L325.0,234.42 L325.5,235.14 L326.0,235.88 L326.5,236.62 L327.0,237.37 L327.5,238.13 L328.0,238.89 L328.5,239.66 L329.0,240.43 L329.5,241.20 L330.0,241.97 L330.5,242.75 L331.0,243.52 L331.5,244.30 L332.0,245.07 L332.5,245.84 L333.0,246.60 L333.5,247.36 L334.0,248.11 L334.5,248.86 L335.0,249.60 L335.5,250.33 L336.0,251.05 L336.5,251.77 L337.0,252.47 L337.5,253.16 L338.0,253.83 L338.5,254.49 L339.0,255.14 L339.5,255.77 L340.0,256.39 L340.5,256.99 L341.0,257.57 L341.5,258.14 L342.0,258.68 L342.5,259.21 L343.0,259.71 L343.5,260.20 L344.0,260.66 L344.5,261.10 L345.0,261.52 L345.5,261.92 L346.0,262.29 L346.5,262.64 L347.0,262.96 L347.5,263.26 L348.0,263.54 L348.5,263.79 L349.0,264.01 L349.5,264.20 L350.0,264.20 L350.5,264.20 L351.0,264.20 L351.5,264.20 L352.0,264.20 L352.5,264.20 L353.0,264.20 L353.5,264.20 L354.0,264.20 L354.5,264.20 L355.0,264.20 L355.5,264.20 L356.0,264.20 L356.5,264.17 L357.0,263.97 L357.5,263.74 L358.0,263.48 L358.5,263.21 L359.0,262.90 L359.5,262.57 L360.0,262.22 L360.5,261.84 L361.0,261.44 L361.5,261.02 L362.0,260.57 L362.5,260.10 L363.0,259.61 L363.5,259.10 L364.0,258.57 L364.5,258.02 L365.0,257.46 L365.5,256.87 L366.0,256.27 L366.5,255.65 L367.0,255.01 L367.5,254.36 L368.0,253.70 L368.5,253.02 L369.0,252.33 L369.5,251.62 L370.0,250.91 L370.5,250.19 L371.0,249.45 L371.5,248.71 L372.0,247.96 L372.5,247.21 L373.0,246.45 L373.5,245.68 L374.0,244.91 L374.5,244.14 L375.0,243.37 L375.5,242.59 L376.0,241.82 L376.5,241.04 L377.0,240.27 L377.5,239.50 L378.0,238.74 L378.5,237.98 L379.0,237.22 L379.5,236.47 L380.0,235.73 L380.5,235.00 L381.0,234.27 L381.5,233.56 L382.0,232.86 L382.5,232.17 L383.0,231.49 L383.5,230.82 L384.0,230.17 L384.5,229.54 L385.0,228.92 L385.5,228.32 L386.0,227.73 L386.5,227.16 L387.0,226.62 L387.5,226.09 L388.0,225.58 L388.5,225.09 L389.0,224.62 L389.5,224.18 L390.0,223.75 L390.5,223.35 L391.0,222.98 L391.5,222.62 L392.0,222.29 L392.5,221.99 L393.0,221.71 L393.5,221.46 L394.0,221.23 L394.5,221.03 L395.0,221.00 L395.5,221.00 L396.0,221.00 L396.5,221.00 L397.0,221.00 L397.5,221.00 L398.0,221.00 L398.5,221.00 L399.0,221.00 L399.5,221.00 L400.0,221.00 L400.5,221.00 L401.0,221.00 L401.5,221.00 L402.0,221.19 L402.5,221.42 L403.0,221.67 L403.5,221.94 L404.0,222.24 L404.5,222.57 L405.0,222.92 L405.5,223.29 L406.0,223.69 L406.5,224.11 L407.0,224.55 L407.5,225.01 L408.0,225.50 L408.5,226.00 L409.0,226.53 L409.5,227.08 L410.0,227.64 L410.5,228.22 L411.0,228.82 L411.5,229.44 L412.0,230.07 L412.5,230.72 L413.0,231.38 L413.5,232.06 L414.0,232.75 L414.5,233.45 L415.0,234.16 L415.5,234.88 L416.0,235.61 L416.5,236.35 L417.0,237.10 L417.5,237.85 L418.0,238.61 L418.5,239.38 L419.0,240.15 L419.5,240.92 L420.0,241.69 L420.5,242.47 L421.0,243.24 L421.5,244.02 L422.0,244.79 L422.5,245.56 L423.0,246.33 L423.5,247.09 L424.0,247.84 L424.5,248.59 L425.0,249.34 L425.5,250.07 L426.0,250.80 L426.5,251.51 L427.0,252.22 L427.5,252.91 L428.0,253.59 L428.5,254.26 L429.0,254.91 L429.5,255.55 L430.0,256.17 L430.5,256.78 L431.0,257.36 L431.5,257.94 L432.0,258.49 L432.5,259.02 L433.0,259.53 L433.5,260.03 L434.0,260.50 L434.5,260.95 L435.0,261.37 L435.5,261.78 L436.0,262.16 L436.5,262.52 L437.0,262.85 L437.5,263.16 L438.0,263.44 L438.5,263.70 L439.0,263.93 L439.5,264.14 L440.0,264.20 L440.5,264.20 L441.0,264.20 L441.5,264.20 L442.0,264.20 L442.5,264.20 L443.0,264.20 L443.5,264.20 L444.0,264.20 L444.5,264.20 L445.0,264.20 L445.5,264.20 L446.0,264.20 L446.5,264.20 L447.0,264.04 L447.5,263.82 L448.0,263.58 L448.5,263.31 L449.0,263.01 L449.5,262.69 L450.0,262.35 L450.5,261.98 L451.0,261.59 L451.5,261.17 L452.0,260.73 L452.5,260.27 L453.0,259.79 L453.5,259.29 L454.0,258.77 L454.5,258.22 L455.0,257.66 L455.5,257.08 L456.0,256.49 L456.5,255.87 L457.0,255.24 L457.5,254.60 L458.0,253.94 L458.5,253.26 L459.0,252.58 L459.5,251.88 L460.0,251.17 L460.5,250.45 L461.0,249.72 L461.5,248.98 L462.0,248.23 L462.5,247.48 L463.0,246.72 L463.5,245.96 L464.0,245.19 L464.5,244.42 L465.0,243.65 L465.5,242.87 L466.0,242.10 L466.5,241.32 L467.0,240.55 L467.5,239.78 L468.0,239.01 L468.5,238.25 L469.0,237.49 L469.5,236.74 L470.0,236.00 L470.5,235.26 L471.0,234.53 L471.5,233.82 L472.0,233.11 L472.5,232.41 L473.0,231.73 L473.5,231.06 L474.0,230.41 L474.5,229.77 L475.0,229.14 L475.5,228.53 L476.0,227.94 L476.5,227.37 L477.0,226.81 L477.5,226.27 L478.0,225.76 L478.5,225.26 L479.0,224.79 L479.5,224.33 L480.0,223.90 L480.5,223.49 L481.0,223.11 L481.5,222.75 L482.0,222.41 L482.5,222.10 L483.0,221.81 L483.5,221.54 L484.0,221.31 L484.5,221.10 L485.0,221.00 L485.5,221.00 L486.0,221.00 L486.5,221.00 L487.0,221.00 L487.5,221.00 L488.0,221.00 L488.5,221.00 L489.0,221.00 L489.5,221.00 L490.0,221.00 L490.5,221.00 L491.0,221.00 L491.5,221.00 L492.0,221.12 L492.5,221.33 L493.0,221.57 L493.5,221.84 L494.0,222.13 L494.5,222.45 L495.0,222.79 L495.5,223.15 L496.0,223.54 L496.5,223.95 L497.0,224.39 L497.5,224.84 L498.0,225.32 L498.5,225.82 L499.0,226.34 L499.5,226.88 L500.0,227.43 L500.5,228.01 L501.0,228.60 L501.5,229.22 L502.0,229.84 L502.5,230.48 L503.0,231.14 L503.5,231.81 L504.0,232.50 L504.5,233.19 L505.0,233.90 L505.5,234.62 L506.0,235.35 L506.5,236.09 L507.0,236.83 L507.5,237.58 L508.0,238.34 L508.5,239.10 L509.0,239.87 L509.5,240.64 L510.0,241.41 L510.5,242.19 L511.0,242.96 L511.5,243.74 L512.0,244.51 L512.5,245.28 L513.0,246.05 L513.5,246.81 L514.0,247.57 L514.5,248.32 L515.0,249.07 L515.5,249.81 L516.0,250.54 L516.5,251.26 L517.0,251.96 L517.5,252.66 L518.0,253.35 L518.5,254.02 L519.0,254.68 L519.5,255.32 L520.0,255.95 L520.5,256.56 L521.0,257.15 L521.5,257.73 L522.0,258.29 L522.5,258.83 L523.0,259.35 L523.5,259.85 L524.0,260.33 L524.5,260.79 L525.0,261.22 L525.5,261.63 L526.0,262.02 L526.5,262.39 L527.0,262.73 L527.5,263.05 L528.0,263.34 L528.5,263.61 L529.0,263.85 L529.5,264.07 L530.0,264.20 L530.5,264.20 L531.0,264.20 L531.5,264.20 L532.0,264.20 L532.5,264.20 L533.0,264.20 L533.5,264.20 L534.0,264.20 L534.5,264.20 L535.0,264.20 L535.5,264.20 L536.0,264.20 L536.5,264.20 L537.0,264.12 L537.5,263.91 L538.0,263.67 L538.5,263.41 L539.0,263.12 L539.5,262.81 L540.0,262.47 L540.5,262.11 L541.0,261.73 L541.5,261.32 L542.0,260.89 L542.5,260.44 L543.0,259.97 L543.5,259.47 L544.0,258.96 L544.5,258.42 L545.0,257.87 L545.5,257.29 L546.0,256.70 L546.5,256.10 L547.0,255.47 L547.5,254.83 L548.0,254.18 L548.5,253.51 L549.0,252.83 L549.5,252.13 L550.0,251.43 L550.5,250.71 L551.0,249.98 L551.5,249.25 L552.0,248.50 L552.5,247.75 L553.0,247.00 L553.5,246.23 L554.0,245.47 L554.5,244.70 L555.0,243.92 L555.5,243.15 L556.0,242.38 L556.5,241.60 L557.0,240.83 L557.5,240.06 L558.0,239.29 L558.5,238.52 L559.0,237.76 L559.5,237.01 L560.0,236.26 L560.5,235.52 L561.0,234.79 L561.5,234.07 L562.0,233.36 L562.5,232.66 L563.0,231.98 L563.5,231.30 L564.0,230.64 L564.5,230.00 L565.0,229.36 L565.5,228.75 L566.0,228.15 L566.5,227.57 L567.0,227.01 L567.5,226.47 L568.0,225.94 L568.5,225.44 L569.0,224.96 L569.5,224.49 L570.0,224.05 L570.5,223.64 L571.0,223.24 L571.5,222.87 L572.0,222.53 L572.5,222.21 L573.0,221.91 L573.5,221.64 L574.0,221.39 L574.5,221.17 L575.0,221.00 L575.5,221.00 L576.0,221.00 L576.5,221.00 L577.0,221.00 L577.5,221.00 L578.0,221.00 L578.5,221.00 L579.0,221.00 L579.5,221.00 L580.0,221.00 L580.5,221.00 L581.0,221.00 L581.5,221.00 L582.0,221.05 L582.5,221.25 L583.0,221.48 L583.5,221.74 L584.0,222.02 L584.5,222.33 L585.0,222.66 L585.5,223.02 L586.0,223.40 L586.5,223.80 L587.0,224.23 L587.5,224.68 L588.0,225.15 L588.5,225.64 L589.0,226.15 L589.5,226.68 L590.0,227.23 L590.5,227.80 L591.0,228.39 L591.5,228.99 L592.0,229.61 L592.5,230.25 L593.0,230.90 L593.5,231.57 L594.0,232.25 L594.5,232.94 L595.0,233.65 L595.5,234.36 L596.0,235.09 L596.5,235.82 L597.0,236.56 L597.5,237.31 L598.0,238.07 L598.5,238.83 L599.0,239.59 L599.5,240.36 L600.0,241.14 L600.5,241.91 L601.0,242.69 L601.5,243.46 L602.0,244.23 L602.5,245.01 L603.0,245.77 L603.5,246.54 L604.0,247.30 L604.5,248.05 L605.0,248.80 L605.5,249.54 L606.0,250.27 L606.5,251.00 L607.0,251.71 L607.5,252.41 L608.0,253.10 L608.5,253.78 L609.0,254.44 L609.5,255.09 L610.0,255.72 L610.5,256.34 L611.0,256.94 L611.5,257.53 L612.0,258.09 L612.5,258.64 L613.0,259.17 L613.5,259.67 L614.0,260.16 L614.5,260.62 L615.0,261.07 L615.5,261.49 L616.0,261.89 L616.5,262.26 L617.0,262.61 L617.5,262.94 L618.0,263.24 L618.5,263.52 L619.0,263.77 L619.5,263.99 L620.0,264.19 L620.5,264.20 L621.0,264.20 L621.5,264.20 L622.0,264.20 L622.5,264.20 L623.0,264.20 L623.5,264.20 L624.0,264.20 L624.5,264.20 L625.0,264.20 L625.5,264.20 L626.0,264.20 L626.5,264.20 L627.0,264.19 L627.5,263.99 L628.0,263.76 L628.5,263.51 L629.0,263.23 L629.5,262.93 L630.0,262.60 L630.5,262.25 L631.0,261.87 L631.5,261.47 L632.0,261.05 L632.5,260.61 L633.0,260.14 L633.5,259.65 L634.0,259.14 L634.5,258.62 L635.0,258.07 L635.5,257.50 L636.0,256.92 L636.5,256.32 L637.0,255.70 L637.5,255.06 L638.0,254.41 L638.5,253.75 L639.0,253.07 L639.5,252.38 L640.0,251.68 L640.5,250.97 L641.0,250.25 L641.5,249.51 L642.0,248.77 L642.5,248.02 L643.0,247.27 L643.5,246.51 L644.0,245.74 L644.5,244.97 L645.0,244.20 L645.5,243.43 L646.0,242.65 L646.5,241.88 L647.0,241.11 L647.5,240.33 L648.0,239.56 L648.5,238.80 L649.0,238.04 L649.5,237.28 L650.0,236.53 L650.5,235.79 L651.0,235.06 L651.5,234.33 L652.0,233.62 L652.5,232.91 L653.0,232.22 L653.5,231.54 L654.0,230.88 L654.5,230.23 L655.0,229.59 L655.5,228.97 L656.0,228.36 L656.5,227.78 L657.0,227.21 L657.5,226.66 L658.0,226.13 L658.5,225.62 L659.0,225.13 L659.5,224.66 L660.0,224.21 L660.5,223.79 L661.0,223.38 L661.5,223.00 L662.0,222.65 L662.5,222.32 L663.0,222.01 L663.5,221.73 L664.0,221.48 L664.5,221.24 L665.0,221.04 L665.5,221.00 L666.0,221.00 L666.5,221.00 L667.0,221.00 L667.5,221.00 L668.0,221.00 L668.5,221.00 L669.0,221.00 L669.5,221.00 L670.0,221.00 L670.5,221.00 L671.0,221.00 L671.5,221.00 L672.0,221.00 L672.5,221.18 L673.0,221.40 L673.5,221.65 L674.0,221.92 L674.5,222.22 L675.0,222.54 L675.5,222.89 L676.0,223.26 L676.5,223.65 L677.0,224.07 L677.5,224.51 L678.0,224.97 L678.5,225.46 L679.0,225.96 L679.5,226.49 L680.0,227.03 L680.5,227.59 L681.0,228.17 L681.5,228.77 L682.0,229.39 L682.5,230.02 L683.0,230.67 L683.5,231.33 L684.0,232.00 L684.5,232.69 L685.0,233.39 L685.5,234.10 L686.0,234.82 L686.5,235.55 L687.0,236.29 L687.5,237.04 L688.0,237.79 L688.5,238.55 L689.0,239.32 L689.5,240.09 L690.0,240.86 L690.5,241.63 L691.0,242.41 L691.5,243.18 L692.0,243.96 L692.5,244.73 L693.0,245.50 L693.5,246.26 L694.0,247.03 L694.5,247.78 L695.0,248.53 L695.5,249.28 L696.0,250.01 L696.5,250.74 L697.0,251.45 L697.5,252.16 L698.0,252.85 L698.5,253.54 L699.0,254.20 L699.5,254.86 L700.0,255.50 L700.5,256.12 L701.0,256.73 L701.5,257.32 L702.0,257.89 L702.5,258.44 L703.0,258.98 L703.5,259.49 L704.0,259.99 L704.5,260.46 L705.0,260.91 L705.5,261.34 L706.0,261.75 L706.5,262.13 L707.0,262.49 L707.5,262.82 L708.0,263.13 L708.5,263.42 L709.0,263.68 L709.5,263.92 L710.0,264.12 L710.5,264.20 L711.0,264.20 L711.5,264.20 L712.0,264.20 L712.5,264.20 L713.0,264.20 L713.5,264.20 L714.0,264.20 L714.5,264.20 L715.0,264.20 L715.5,264.20 L716.0,264.20 L716.5,264.20 L717.0,264.20 L717.5,264.06 L718.0,263.84 L718.5,263.60 L719.0,263.33 L719.5,263.04 L720.0,262.72 L720.5,262.38 L721.0,262.01" fill="none" stroke="#b0b0ec" stroke-width="1.5"/><rect x="36.00" y="392.40" width="33.00" height="1.7" fill="#e2782e"/><rect x="69.00" y="346.70" width="45.80" height="1.5" fill="#e2782e"/><rect x="85.50" y="347.40" width="26.50" height="1.8" fill="#d0682a"/><rect x="114.00" y="392.40" width="45.18" height="1.7" fill="#e2782e"/><rect x="68.40" y="346.70" width="1.3" height="47.30" fill="#e89a68"/><rect x="113.10" y="346.70" width="1.9" height="47.30" fill="#e2782e"/><rect x="159.18" y="346.70" width="45.80" height="1.5" fill="#e2782e"/><rect x="175.68" y="347.40" width="26.50" height="1.8" fill="#d0682a"/><rect x="204.18" y="392.40" width="45.18" height="1.7" fill="#e2782e"/><rect x="158.58" y="346.70" width="1.3" height="47.30" fill="#e89a68"/><rect x="203.28" y="346.70" width="1.9" height="47.30" fill="#e2782e"/><rect x="249.36" y="346.70" width="45.80" height="1.5" fill="#e2782e"/><rect x="265.86" y="347.40" width="26.50" height="1.8" fill="#d0682a"/><rect x="294.36" y="392.40" width="45.18" height="1.7" fill="#e2782e"/><rect x="248.76" y="346.70" width="1.3" height="47.30" fill="#e89a68"/><rect x="293.46" y="346.70" width="1.9" height="47.30" fill="#e2782e"/><rect x="339.54" y="346.70" width="45.80" height="1.5" fill="#e2782e"/><rect x="356.04" y="347.40" width="26.50" height="1.8" fill="#d0682a"/><rect x="384.54" y="392.40" width="45.18" height="1.7" fill="#e2782e"/><rect x="338.94" y="346.70" width="1.3" height="47.30" fill="#e89a68"/><rect x="383.64" y="346.70" width="1.9" height="47.30" fill="#e2782e"/><rect x="429.72" y="346.70" width="45.80" height="1.5" fill="#e2782e"/><rect x="446.22" y="347.40" width="26.50" height="1.8" fill="#d0682a"/><rect x="474.72" y="392.40" width="45.18" height="1.7" fill="#e2782e"/><rect x="429.12" y="346.70" width="1.3" height="47.30" fill="#e89a68"/><rect x="473.82" y="346.70" width="1.9" height="47.30" fill="#e2782e"/><rect x="519.90" y="346.70" width="45.80" height="1.5" fill="#e2782e"/><rect x="536.40" y="347.40" width="26.50" height="1.8" fill="#d0682a"/><rect x="564.90" y="392.40" width="45.18" height="1.7" fill="#e2782e"/><rect x="519.30" y="346.70" width="1.3" height="47.30" fill="#e89a68"/><rect x="564.00" y="346.70" width="1.9" height="47.30" fill="#e2782e"/><rect x="610.08" y="346.70" width="45.80" height="1.5" fill="#e2782e"/><rect x="626.58" y="347.40" width="26.50" height="1.8" fill="#d0682a"/><rect x="655.08" y="392.40" width="45.18" height="1.7" fill="#e2782e"/><rect x="609.48" y="346.70" width="1.3" height="47.30" fill="#e89a68"/><rect x="654.18" y="346.70" width="1.9" height="47.30" fill="#e2782e"/><rect x="700.26" y="346.70" width="20.54" height="1.5" fill="#e2782e"/><rect x="716.76" y="347.40" width="3.24" height="1.8" fill="#d0682a"/><rect x="699.66" y="346.70" width="1.3" height="47.30" fill="#e89a68"/><rect x="36.00" y="489.50" width="33.00" height="1.7" fill="#9cee3c"/><rect x="69.00" y="443.80" width="46.10" height="1.5" fill="#9cee3c"/><rect x="114.30" y="489.50" width="44.88" height="1.7" fill="#9cee3c"/><rect x="68.40" y="443.80" width="1.3" height="47.30" fill="#c0f484"/><rect x="113.40" y="443.80" width="1.9" height="47.30" fill="#9cee3c"/><rect x="159.18" y="443.80" width="46.10" height="1.5" fill="#9cee3c"/><rect x="204.48" y="489.50" width="44.88" height="1.7" fill="#9cee3c"/><rect x="158.58" y="443.80" width="1.3" height="47.30" fill="#c0f484"/><rect x="203.58" y="443.80" width="1.9" height="47.30" fill="#9cee3c"/><rect x="249.36" y="443.80" width="46.10" height="1.5" fill="#9cee3c"/><rect x="294.66" y="489.50" width="44.88" height="1.7" fill="#9cee3c"/><rect x="248.76" y="443.80" width="1.3" height="47.30" fill="#c0f484"/><rect x="293.76" y="443.80" width="1.9" height="47.30" fill="#9cee3c"/><rect x="339.54" y="443.80" width="46.10" height="1.5" fill="#9cee3c"/><rect x="384.84" y="489.50" width="44.88" height="1.7" fill="#9cee3c"/><rect x="338.94" y="443.80" width="1.3" height="47.30" fill="#c0f484"/><rect x="383.94" y="443.80" width="1.9" height="47.30" fill="#9cee3c"/><rect x="429.72" y="443.80" width="46.10" height="1.5" fill="#9cee3c"/><rect x="475.02" y="489.50" width="44.88" height="1.7" fill="#9cee3c"/><rect x="429.12" y="443.80" width="1.3" height="47.30" fill="#c0f484"/><rect x="474.12" y="443.80" width="1.9" height="47.30" fill="#9cee3c"/><rect x="519.90" y="443.80" width="46.10" height="1.5" fill="#9cee3c"/><rect x="565.20" y="489.50" width="44.88" height="1.7" fill="#9cee3c"/><rect x="519.30" y="443.80" width="1.3" height="47.30" fill="#c0f484"/><rect x="564.30" y="443.80" width="1.9" height="47.30" fill="#9cee3c"/><rect x="610.08" y="443.80" width="46.10" height="1.5" fill="#9cee3c"/><rect x="655.38" y="489.50" width="44.88" height="1.7" fill="#9cee3c"/><rect x="609.48" y="443.80" width="1.3" height="47.30" fill="#c0f484"/><rect x="654.48" y="443.80" width="1.9" height="47.30" fill="#9cee3c"/><rect x="700.26" y="443.80" width="20.54" height="1.5" fill="#9cee3c"/><rect x="699.66" y="443.80" width="1.3" height="47.30" fill="#c0f484"/></g><path d="M10 122 H28 L35 130 L28 138 H10 Z" fill="#f0f020"/><text x="11.5" y="135.2" font-family="Liberation Sans" font-size="12.5" textLength="22" lengthAdjust="spacingAndGlyphs" style="font-style:italic;" fill="#101010">CH1</text><path d="M10 233.5 H28 L35 241.5 L28 249.5 H10 Z" fill="#b8b8f0"/><text x="11.5" y="246.7" font-family="Liberation Sans" font-size="12.5" textLength="22" lengthAdjust="spacingAndGlyphs" style="" fill="#10103a">CH2</text><path d="M10 361.5 H28 L35 369.5 L28 377.5 H10 Z" fill="#e8782e"/><text x="11.5" y="374.7" font-family="Liberation Sans" font-size="12.5" textLength="22" lengthAdjust="spacingAndGlyphs" style="" fill="#200800">CH3</text><path d="M10 458.5 H28 L35 466.5 L28 474.5 H10 Z" fill="#98ee30"/><text x="11.5" y="471.7" font-family="Liberation Sans" font-size="12.5" textLength="22" lengthAdjust="spacingAndGlyphs" style="" fill="#082008">CH4</text></svg><div class="ab" style="left:720px;top:76px;width:6px;height:456px;background:#f6f7fb"></div><div class="ab" style="left:740px;top:84px;width:1px;height:439px;background:#9c9c9c"></div><div class="ab" style="left:741px;top:84px;width:1px;height:439px;background:#fff"></div><div class="ab" style="left:725px;top:89px;width:5px;height:1px;background:#c4c4c4"></div><div class="ab" style="left:753px;top:89px;width:6px;height:1px;background:#c4c4c4"></div><div class="ab" style="left:725px;top:196px;width:5px;height:1px;background:#c4c4c4"></div><div class="ab" style="left:753px;top:196px;width:6px;height:1px;background:#c4c4c4"></div><div class="ab" style="left:725px;top:304px;width:5px;height:1px;background:#c4c4c4"></div><div class="ab" style="left:753px;top:304px;width:6px;height:1px;background:#c4c4c4"></div><div class="ab" style="left:725px;top:411px;width:5px;height:1px;background:#c4c4c4"></div><div class="ab" style="left:753px;top:411px;width:6px;height:1px;background:#c4c4c4"></div><div class="ab" style="left:725px;top:518px;width:5px;height:1px;background:#c4c4c4"></div><div class="ab" style="left:753px;top:518px;width:6px;height:1px;background:#c4c4c4"></div><div class="ab" style="left:731px;top:258px;width:21px;height:10px;border:1px solid #505050;border-radius:1.5px;background:linear-gradient(#ececec,#d8d8d8);box-shadow:inset 0 0 0 1px #fff"></div><div class="ab" style="left:763px;top:76px;width:1px;height:456px;background:#a0a0a0"></div><div class="ab" style="left:764px;top:76px;width:1px;height:456px;background:#fff"></div><div class="gb" style="left:768.5px;top:84.5px;width:224.0px;height:316.0px"></div><div class="t" style="left:776.9px;top:79.04px;font-size:12.60px;color:#1a1a1a;background:#f0f0f0;padding:0 1px;">CH1 Cursor</div><div class="t" style="left:781.9px;top:110.40px;font-size:13.00px;color:#1a1a1a;">dy:</div><div class="t" style="left:781.9px;top:137.40px;font-size:13.00px;color:#1a1a1a;">y1:</div><div class="t" style="left:781.9px;top:164.40px;font-size:13.00px;color:#1a1a1a;">y2:</div><div class="t" style="left:781.9px;top:191.40px;font-size:13.00px;color:#1a1a1a;">dx:</div><div class="t" style="left:781.9px;top:218.40px;font-size:13.00px;color:#1a1a1a;">x1:</div><div class="t" style="left:781.9px;top:245.40px;font-size:13.00px;color:#1a1a1a;">x2:</div><div class="t" style="left:781.9px;top:272.82px;font-size:12.50px;color:#1a1a1a;">Divisions:</div><div class="t" style="left:846.0px;top:272.04px;font-size:13.42px;color:#1a1a1a;">[-20~20]</div><div class="t" style="left:846.4px;top:299.90px;font-size:13.00px;color:#1a1a1a;">3.81</div><div class="t" style="left:781.9px;top:331.10px;font-size:13.00px;color:#1a1a1a;">Type:</div><div class="cb" style="left:846px;top:324px;width:135px;height:25px"></div><svg class="ab" style="left:969px;top:334.0px" width="8" height="5"><path d="M0.5 0.5h7L4 4.5z" fill="#111"/></svg><div class="t" style="left:850.2px;top:330.90px;font-size:13.00px;color:#1a1a1a;">None</div><div class="gb" style="left:768.5px;top:410.5px;width:224.5px;height:55.0px"></div><div class="t" style="left:777.6px;top:404.80px;font-size:13.00px;color:#1a1a1a;background:#f0f0f0;padding:0 1px;">CH1 Time / Div</div><div class="t" style="left:781.9px;top:435.50px;font-size:13.00px;color:#1a1a1a;">scale:</div><div class="cb" style="left:846px;top:429px;width:135px;height:25px"></div><svg class="ab" style="left:969px;top:439.0px" width="8" height="5"><path d="M0.5 0.5h7L4 4.5z" fill="#111"/></svg><div class="t" style="left:850.2px;top:435.90px;font-size:13.00px;color:#1a1a1a;">500us</div><div class="gb" style="left:768.5px;top:475px;width:224.5px;height:55px"></div><div class="t" style="left:777.6px;top:469.40px;font-size:13.00px;color:#1a1a1a;background:#f0f0f0;padding:0 1px;">CH1 Volt / Div</div><div class="t" style="left:781.9px;top:501.40px;font-size:13.00px;color:#1a1a1a;">scale:</div><div class="cb" style="left:846px;top:494px;width:135px;height:25px"></div><svg class="ab" style="left:969px;top:504.0px" width="8" height="5"><path d="M0.5 0.5h7L4 4.5z" fill="#111"/></svg><div class="t" style="left:850.2px;top:500.90px;font-size:13.00px;color:#1a1a1a;">10.0V</div><div class="ab" style="left:10px;top:535px;width:653px;height:108px;border:1px solid #8e9296;background:#fff"></div><div class="ab" style="left:12px;top:537px;width:649px;height:21px;background:linear-gradient(#fbfbfb,#ececec);border-radius:2px;box-shadow:inset 0 -1px 0 #e2e2e2"></div><div class="ab" style="left:11px;top:558px;width:651px;height:1px;background:#f0f0f0"></div><div class="ab" style="left:11px;top:580px;width:651px;height:1px;background:#f0f0f0"></div><div class="ab" style="left:11px;top:602px;width:651px;height:1px;background:#f0f0f0"></div><div class="ab" style="left:11px;top:624px;width:651px;height:1px;background:#f0f0f0"></div><div class="ab" style="left:175px;top:559px;width:1px;height:83px;background:#ececec"></div><div class="ab" style="left:175px;top:537px;width:1px;height:21px;background:#e4e4e4"></div><div class="ab" style="left:337px;top:559px;width:1px;height:83px;background:#ececec"></div><div class="ab" style="left:337px;top:537px;width:1px;height:21px;background:#e4e4e4"></div><div class="ab" style="left:499px;top:559px;width:1px;height:83px;background:#ececec"></div><div class="ab" style="left:499px;top:537px;width:1px;height:21px;background:#e4e4e4"></div><div class="ab" style="left:20px;top:541px;width:13px;height:13px;border:1px solid #8e8f8f;background:linear-gradient(135deg,#dcdcdc,#fff);box-shadow:inset 0 0 0 1px #f4f4f4"></div><svg class="ab" style="left:20px;top:541px" width="13" height="13"><path d="M3.2 6.5L5.6 10.2L10 2.8" fill="none" stroke="#4e5e90" stroke-width="1.6"/></svg><div class="t" style="left:42.9px;top:541.40px;font-size:13.00px;color:#1a1a1a;">CH1</div><div class="t" style="left:295.6px;top:542.18px;font-size:12.07px;color:#1a1a1a;">500us</div><div class="t" style="left:459.8px;top:542.29px;font-size:11.94px;color:#1a1a1a;">10.0V</div><div class="t" style="left:504.7px;top:541.25px;font-size:13.17px;color:#1a1a1a;">/10.0</div><div class="ab" style="left:20px;top:563px;width:13px;height:13px;border:1px solid #8e8f8f;background:linear-gradient(135deg,#dcdcdc,#fff);box-shadow:inset 0 0 0 1px #f4f4f4"></div><svg class="ab" style="left:20px;top:563px" width="13" height="13"><path d="M3.2 6.5L5.6 10.2L10 2.8" fill="none" stroke="#4e5e90" stroke-width="1.6"/></svg><div class="t" style="left:42.9px;top:563.40px;font-size:13.00px;color:#1a1a1a;">CH2</div><div class="t" style="left:295.6px;top:564.18px;font-size:12.07px;color:#1a1a1a;">500us</div><div class="t" style="left:459.8px;top:564.29px;font-size:11.94px;color:#1a1a1a;">10.0V</div><div class="t" style="left:504.7px;top:563.25px;font-size:13.17px;color:#1a1a1a;">/10.0</div><div class="ab" style="left:20px;top:585px;width:13px;height:13px;border:1px solid #8e8f8f;background:linear-gradient(135deg,#dcdcdc,#fff);box-shadow:inset 0 0 0 1px #f4f4f4"></div><svg class="ab" style="left:20px;top:585px" width="13" height="13"><path d="M3.2 6.5L5.6 10.2L10 2.8" fill="none" stroke="#4e5e90" stroke-width="1.6"/></svg><div class="t" style="left:42.9px;top:585.40px;font-size:13.00px;color:#1a1a1a;">CH3</div><div class="t" style="left:295.6px;top:586.18px;font-size:12.07px;color:#1a1a1a;">500us</div><div class="t" style="left:459.8px;top:586.29px;font-size:11.94px;color:#1a1a1a;">10.0V</div><div class="t" style="left:504.7px;top:585.25px;font-size:13.17px;color:#1a1a1a;">/10.0</div><div class="ab" style="left:20px;top:607px;width:13px;height:13px;border:1px solid #8e8f8f;background:linear-gradient(135deg,#dcdcdc,#fff);box-shadow:inset 0 0 0 1px #f4f4f4"></div><svg class="ab" style="left:20px;top:607px" width="13" height="13"><path d="M3.2 6.5L5.6 10.2L10 2.8" fill="none" stroke="#4e5e90" stroke-width="1.6"/></svg><div class="t" style="left:42.9px;top:607.40px;font-size:13.00px;color:#1a1a1a;">CH4</div><div class="t" style="left:295.6px;top:608.18px;font-size:12.07px;color:#1a1a1a;">500us</div><div class="t" style="left:459.8px;top:608.29px;font-size:11.94px;color:#1a1a1a;">10.0V</div><div class="t" style="left:504.7px;top:607.25px;font-size:13.17px;color:#1a1a1a;">/10.0</div><div class="dis" style="left:11px;top:644px;width:312px;height:25px"></div><div class="t" style="left:16.9px;top:649.93px;font-size:13.19px;color:#8a8a8a;">To FFT. Current status not support for this compute.</div><div class="cb" style="left:328px;top:644px;width:103px;height:25px"></div><div class="t" style="left:333.6px;top:649.98px;font-size:13.14px;color:#1a1a1a;">To Mathematics</div><div class="cb" style="left:436px;top:644px;width:58px;height:25px"></div><div class="t" style="left:441.2px;top:650.09px;font-size:13.01px;color:#1a1a1a;">Inverted</div><div class="dis" style="left:499px;top:644px;width:57px;height:25px"></div><div class="t" style="left:504.4px;top:650.60px;font-size:12.41px;color:#8a8a8a;">Remove</div><div class="ab" style="left:10px;top:670px;width:653px;height:1px;background:#a8a8a8"></div><div class="gb" style="left:666px;top:543.5px;width:326.5px;height:127.0px"></div><div class="t" style="left:675.2px;top:538.10px;font-size:12.76px;color:#1a1a1a;background:#f0f0f0;padding:0 1px;">CH1 WaveForm Info</div><div class="ab" style="left:679px;top:557px;width:302px;height:107px;border:1px solid #8e9296;background:#fff"></div><div class="ab" style="left:680px;top:558px;width:300px;height:23px;background:linear-gradient(#fff,#f3f4f6);border-bottom:1px solid #e2e4e8"></div><div class="ab" style="left:800px;top:558px;width:1px;height:105px;background:#ececec"></div><div class="ab" style="left:960px;top:558px;width:1px;height:105px;background:#ececec"></div><div class="ab" style="left:680px;top:603px;width:300px;height:1px;background:#f0f0f0"></div><div class="ab" style="left:680px;top:624px;width:300px;height:1px;background:#f0f0f0"></div><div class="ab" style="left:680px;top:645px;width:300px;height:1px;background:#f0f0f0"></div><div class="t" style="left:687.4px;top:564.60px;font-size:12.64px;color:#1a1a1a;">Type</div><div class="t" style="left:807.3px;top:564.30px;font-size:13.00px;color:#1a1a1a;">Value</div><div class="t" style="left:687.4px;top:588.16px;font-size:12.33px;color:#1a1a1a;">Frequency:</div><div class="t" style="left:807.3px;top:587.98px;font-size:12.55px;color:#1a1a1a;">1.000 kHz</div><div class="t" style="left:687.4px;top:608.91px;font-size:12.75px;color:#1a1a1a;">Period:</div><div class="t" style="left:807.3px;top:609.37px;font-size:12.20px;color:#1a1a1a;">999.998 uS</div><div class="t" style="left:687.4px;top:631.17px;font-size:11.50px;color:#1a1a1a;">PK-PK:</div><div class="t" style="left:807.3px;top:630.39px;font-size:12.42px;color:#1a1a1a;">78.1mV</div><div class="ab" style="left:8px;top:671px;width:987px;height:1px;background:#fff"></div><div class="t" style="left:17.5px;top:681.85px;font-size:12.46px;color:#1a1a1a;">D:\XDS3004\DSO\2017-06-06 11_45_08_678.bin</div><div class="t" style="left:802.2px;top:681.71px;font-size:12.63px;color:#56983a;">automatically check USB:</div><svg class="ab" style="left:950px;top:680px" width="18" height="13"><path d="M1.5 6.5h14" stroke="#3a3a3a" stroke-width="1.3"/><path d="M15.5 6.5l-3-2v4z" fill="#3a3a3a"/><circle cx="2" cy="6.5" r="1.6" fill="#3a3a3a"/><path d="M5 6.5l3-4h3" fill="none" stroke="#3a3a3a" stroke-width="1.2"/><path d="M7 6.5l2.5 4h3" fill="none" stroke="#3a3a3a" stroke-width="1.2"/><circle cx="11.5" cy="2.5" r="1.2" fill="#3a3a3a"/><rect x="12" y="9.5" width="2.2" height="2.2" fill="#3a3a3a"/></svg><div class="ab" style="left:973px;top:683px;width:1px;height:13px;background:#d8d8d8"></div><svg class="ab" style="left:977px;top:685px" width="9" height="5"><path d="M0.5 0.5h8L4.5 4.5z" fill="#4a4a4a"/></svg></body></html>
